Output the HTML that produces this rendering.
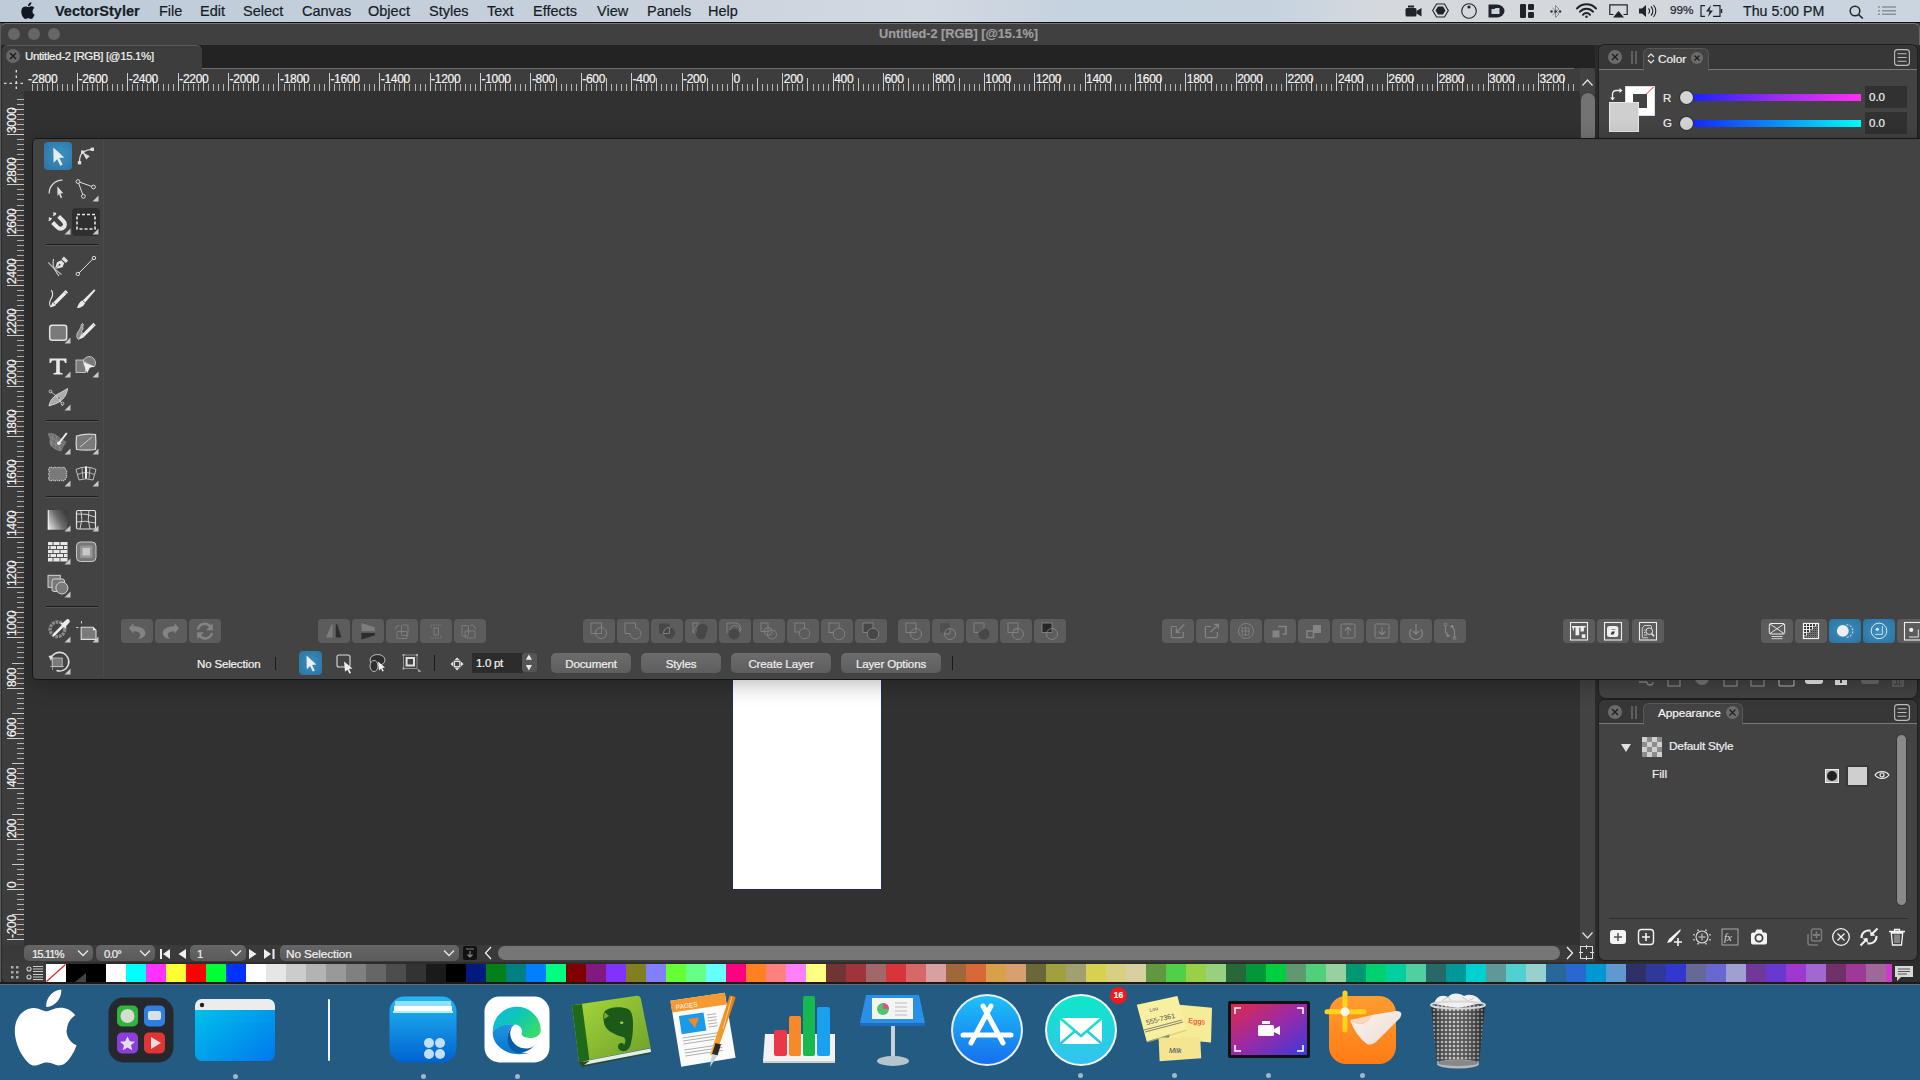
<!DOCTYPE html><html><head><meta charset="utf-8"><style>
*{margin:0;padding:0;box-sizing:border-box}
html,body{width:1920px;height:1080px;overflow:hidden;background:#245b82;font-family:"Liberation Sans",sans-serif}
.a{position:absolute}
.t{position:absolute;white-space:nowrap;line-height:1;-webkit-text-stroke:0.2px currentColor}
svg{position:absolute;overflow:visible}
.btn{position:absolute;width:32px;height:24px;background:#5a5a5a;border-radius:4px}
.pb{position:absolute;-webkit-text-stroke:0.2px currentColor;height:20px;background:linear-gradient(#6c6c6c,#5e5e5e);border-radius:5px;color:#f0f0f0;font-size:11.6px;letter-spacing:-0.15px;text-align:center;line-height:21px}
</style></head><body>
<div class="a" style="left:0;top:0;width:1920px;height:22px;background:linear-gradient(90deg,#bfcbd9 0%,#c6d0dc 30%,#cfd6df 42%,#d3d9e1 48%,#c5d2df 56%,#c6d3df 66%,#d5d9de 72%,#d4d8dd 86%,#c8d3df 92%,#cad5e0 100%)"></div>
<svg style="left:21px;top:2px" width="14" height="17" viewBox="0 0 14 17"><path fill="#111820" d="M11.6 9.1c0-2 1.7-3 1.8-3.1-1-1.4-2.5-1.6-3-1.7-1.3-.1-2.5.8-3.2.8-.7 0-1.7-.8-2.8-.7C3 4.400 1.700 5.200 1 6.500-.5 9.100.6 12.900 2 15c.7 1 1.500 2.100 2.600 2 1-.0 1.400-.7 2.700-.7 1.200 0 1.600.7 2.700.6 1.100 0 1.800-1 2.500-2 .8-1.100 1.100-2.200 1.100-2.300 0 0-2.100-.8-2.100-3.200zM9.500 3c.6-.7 1-1.700.9-2.700-.9 0-1.900.6-2.500 1.300-.5.600-1 1.600-.9 2.600 1 .1 1.900-.5 2.500-1.200z"/></svg>
<div class="t" style="left:55px;top:4px;font-size:14.5px;color:#161c26;font-weight:bold;">VectorStyler</div>
<div class="t" style="left:159px;top:4px;font-size:14.5px;color:#161c26;">File</div>
<div class="t" style="left:200px;top:4px;font-size:14.5px;color:#161c26;">Edit</div>
<div class="t" style="left:243px;top:4px;font-size:14.5px;color:#161c26;">Select</div>
<div class="t" style="left:302px;top:4px;font-size:14.5px;color:#161c26;">Canvas</div>
<div class="t" style="left:368px;top:4px;font-size:14.5px;color:#161c26;">Object</div>
<div class="t" style="left:429px;top:4px;font-size:14.5px;color:#161c26;">Styles</div>
<div class="t" style="left:487px;top:4px;font-size:14.5px;color:#161c26;">Text</div>
<div class="t" style="left:533px;top:4px;font-size:14.5px;color:#161c26;">Effects</div>
<div class="t" style="left:597px;top:4px;font-size:14.5px;color:#161c26;">View</div>
<div class="t" style="left:647px;top:4px;font-size:14.5px;color:#161c26;">Panels</div>
<div class="t" style="left:708px;top:4px;font-size:14.5px;color:#161c26;">Help</div>
<div class="t" style="left:1670px;top:5px;font-size:11.8px;color:#1e232b">99%</div>
<div class="t" style="left:1743px;top:4px;font-size:14.2px;color:#161c26">Thu 5:00 PM</div>
<svg style="left:1405px;top:5px;" width="18" height="12" viewBox="0 0 18 12"><rect x="0.5" y="3" width="11" height="8.5" rx="1.5" fill="#202428"/><rect x="3" y="0.5" width="6" height="2" fill="#202428"/><path d="M11.5 6L16.5 3V11.5L11.5 8.5Z" fill="#202428"/></svg>
<svg style="left:1432px;top:3px;" width="17" height="15" viewBox="0 0 17 15"><path d="M4.5 1H12.5L16.3 7.5L12.5 14H4.5L0.7 7.5Z" fill="none" stroke="#202428" stroke-width="1.1"/><path d="M6 3.5H11L13.5 7.5L11 11.5H6L3.5 7.5Z" fill="#202428"/></svg>
<svg style="left:1461px;top:3px;" width="16" height="16" viewBox="0 0 16 16"><circle cx="8" cy="8" r="7.3" fill="none" stroke="#202428" stroke-width="1.1"/><circle cx="8" cy="4" r="1.6" fill="#202428"/></svg>
<svg style="left:1488px;top:4px;" width="17" height="14" viewBox="0 0 17 14"><path d="M0.5 0.5H9A7.5 6.5 0 0 1 9 13.5H0.5Z" fill="#202428"/><path d="M3.5 5H6.5L7.5 4H11.5V10H3.5Z" fill="#c9d3de"/></svg>
<svg style="left:1520px;top:4px;" width="14" height="14" viewBox="0 0 14 14"><rect x="0" y="0" width="6" height="14" rx="1.2" fill="#202428"/><rect x="8" y="0" width="6" height="6" rx="1.2" fill="#202428"/><rect x="8" y="8" width="6" height="6" rx="1.2" fill="#202428"/></svg>
<svg style="left:1550px;top:4px;" width="12" height="15" viewBox="0 0 12 15"><path d="M2.5 4L9 10L5.5 13.5V1.5L9 5L2.5 11" fill="none" stroke="#7a7f86" stroke-width="0.9"/><circle cx="1.5" cy="7.5" r="1.3" fill="#333"/><circle cx="5.5" cy="7.5" r="1.3" fill="#333"/><circle cx="10" cy="7.5" r="1.3" fill="#333"/></svg>
<svg style="left:1576px;top:3px;" width="21" height="15" viewBox="0 0 21 15"><path d="M1 5.5A13 13 0 0 1 20 5.5M4 8.7A8.5 8.5 0 0 1 17 8.7M7 11.8A4.2 4.2 0 0 1 14 11.8" fill="none" stroke="#202428" stroke-width="2" stroke-linecap="round"/><circle cx="10.5" cy="13.8" r="1.3" fill="#202428"/></svg>
<svg style="left:1609px;top:4px;" width="19" height="14" viewBox="0 0 19 14"><path d="M4.5 10.5H0.8V0.8H18.2V10.5H14.5" fill="none" stroke="#202428" stroke-width="1.2"/><path d="M9.5 7L15 13.5H4Z" fill="#202428"/></svg>
<svg style="left:1639px;top:5px;" width="17" height="12" viewBox="0 0 17 12"><path d="M0 3.5H3L7 0V12L3 8.5H0Z" fill="#202428"/><path d="M9.5 3.5A3.5 3.5 0 0 1 9.5 8.5M12 1.5A6.5 6.5 0 0 1 12 10.5M14.5 0A9 9 0 0 1 14.5 12" fill="none" stroke="#202428" stroke-width="1.1"/></svg>
<svg style="left:1700px;top:5px;" width="23" height="12" viewBox="0 0 23 12"><path d="M5 0.7H1V11.3H5M13 0.7H20V11.3H13" fill="none" stroke="#202428" stroke-width="1.2"/><path d="M21.5 4V8" stroke="#202428" stroke-width="1.5"/><path d="M11 0L6 6.5H9.5L8 12L13 5.5H9.5Z" fill="#202428"/></svg>
<svg style="left:1849px;top:5px;" width="15" height="14" viewBox="0 0 15 14"><circle cx="6" cy="6" r="4.8" fill="none" stroke="#202428" stroke-width="1.5"/><path d="M9.5 9.5L13.8 13.5" stroke="#202428" stroke-width="1.7"/></svg>
<svg style="left:1878px;top:6px;" width="19" height="10" viewBox="0 0 19 10"><path d="M0 1H2M0 4.7H2M0 8.3H2M4 1H18M4 4.7H18M4 8.3H18" stroke="#8a9098" stroke-width="1.6"/></svg>
<div class="a" style="left:0;top:22px;width:1920px;height:964px;background:#404040;border-top:1px solid #0e0e0e"></div>
<div class="a" style="left:0;top:23px;width:1px;height:962px;background:#5a5a5a"></div>
<div class="a" style="left:1px;top:45px;width:1px;height:940px;background:#2a2a2a"></div>
<div class="a" style="left:8px;top:28px;width:12px;height:12px;border-radius:6px;background:#666"></div>
<div class="a" style="left:28px;top:28px;width:12px;height:12px;border-radius:6px;background:#666"></div>
<div class="a" style="left:48px;top:28px;width:12px;height:12px;border-radius:6px;background:#666"></div>
<div class="t" style="left:879px;top:28px;font-size:12.7px;font-weight:bold;color:#9e9e9e">Untitled-2 [RGB] [@15.1%]</div>
<div class="a" style="left:2px;top:45px;width:1597px;height:23px;background:#232323"></div>
<div class="a" style="left:2px;top:68px;width:1572px;height:1px;background:#6e6e6e"></div>
<div class="a" style="left:2px;top:45px;width:200px;height:24px;background:#3d3d3d;border-top:1px solid #5a5a5a;border-radius:6px 6px 0 0"></div>
<div class="a" style="left:6px;top:49px;width:14px;height:14px;border-radius:7px;background:#666"></div>
<svg style="left:9px;top:52px" width="8" height="8"><path d="M1 1L7 7M7 1L1 7" stroke="#1a1a1a" stroke-width="1.3"/></svg>
<div class="t" style="left:25px;top:51px;font-size:11.5px;color:#f2f2f2;letter-spacing:-0.35px">Untitled-2 [RGB] [@15.1%]</div>
<div class="a" style="left:2px;top:69px;width:1593px;height:22px;background:#3d3d3d"></div>
<div class="a" style="left:2px;top:69px;width:22px;height:891px;background:#3d3d3d"></div>
<div class="a" style="left:24px;top:91px;width:1556px;height:854px;background:#313131"></div>
<svg style="left:3px;top:69px" width="21" height="22"><g stroke="#dcdcdc" stroke-width="1.4" stroke-dasharray="2.5 3"><path d="M13.3 1V20"/><path d="M1 14.4H21"/></g></svg>
<svg style="left:0;top:0" width="1920" height="100"><path d="M32.5 84V91" stroke="#b4b4b4"/><path d="M37.5 84V91" stroke="#b4b4b4"/><path d="M42.5 84V91" stroke="#b4b4b4"/><path d="M47.5 84V91" stroke="#b4b4b4"/><path d="M52.5 78V91" stroke="#c8c8c8"/><path d="M57.5 84V91" stroke="#b4b4b4"/><path d="M62.5 84V91" stroke="#b4b4b4"/><path d="M67.5 84V91" stroke="#b4b4b4"/><path d="M72.5 84V91" stroke="#b4b4b4"/><path d="M77.5 73V91" stroke="#cfcfcf"/><path d="M82.5 84V91" stroke="#b4b4b4"/><path d="M87.5 84V91" stroke="#b4b4b4"/><path d="M92.5 84V91" stroke="#b4b4b4"/><path d="M97.5 84V91" stroke="#b4b4b4"/><path d="M102.5 78V91" stroke="#c8c8c8"/><path d="M107.5 84V91" stroke="#b4b4b4"/><path d="M112.5 84V91" stroke="#b4b4b4"/><path d="M117.5 84V91" stroke="#b4b4b4"/><path d="M122.5 84V91" stroke="#b4b4b4"/><path d="M127.5 73V91" stroke="#cfcfcf"/><path d="M132.5 84V91" stroke="#b4b4b4"/><path d="M137.5 84V91" stroke="#b4b4b4"/><path d="M142.5 84V91" stroke="#b4b4b4"/><path d="M147.5 84V91" stroke="#b4b4b4"/><path d="M153.5 78V91" stroke="#c8c8c8"/><path d="M158.5 84V91" stroke="#b4b4b4"/><path d="M163.5 84V91" stroke="#b4b4b4"/><path d="M168.5 84V91" stroke="#b4b4b4"/><path d="M173.5 84V91" stroke="#b4b4b4"/><path d="M178.5 73V91" stroke="#cfcfcf"/><path d="M183.5 84V91" stroke="#b4b4b4"/><path d="M188.5 84V91" stroke="#b4b4b4"/><path d="M193.5 84V91" stroke="#b4b4b4"/><path d="M198.5 84V91" stroke="#b4b4b4"/><path d="M203.5 78V91" stroke="#c8c8c8"/><path d="M208.5 84V91" stroke="#b4b4b4"/><path d="M213.5 84V91" stroke="#b4b4b4"/><path d="M218.5 84V91" stroke="#b4b4b4"/><path d="M223.5 84V91" stroke="#b4b4b4"/><path d="M228.5 73V91" stroke="#cfcfcf"/><path d="M233.5 84V91" stroke="#b4b4b4"/><path d="M238.5 84V91" stroke="#b4b4b4"/><path d="M243.5 84V91" stroke="#b4b4b4"/><path d="M248.5 84V91" stroke="#b4b4b4"/><path d="M253.5 78V91" stroke="#c8c8c8"/><path d="M258.5 84V91" stroke="#b4b4b4"/><path d="M263.5 84V91" stroke="#b4b4b4"/><path d="M268.5 84V91" stroke="#b4b4b4"/><path d="M273.5 84V91" stroke="#b4b4b4"/><path d="M278.5 73V91" stroke="#cfcfcf"/><path d="M284.5 84V91" stroke="#b4b4b4"/><path d="M289.5 84V91" stroke="#b4b4b4"/><path d="M294.5 84V91" stroke="#b4b4b4"/><path d="M299.5 84V91" stroke="#b4b4b4"/><path d="M304.5 78V91" stroke="#c8c8c8"/><path d="M309.5 84V91" stroke="#b4b4b4"/><path d="M314.5 84V91" stroke="#b4b4b4"/><path d="M319.5 84V91" stroke="#b4b4b4"/><path d="M324.5 84V91" stroke="#b4b4b4"/><path d="M329.5 73V91" stroke="#cfcfcf"/><path d="M334.5 84V91" stroke="#b4b4b4"/><path d="M339.5 84V91" stroke="#b4b4b4"/><path d="M344.5 84V91" stroke="#b4b4b4"/><path d="M349.5 84V91" stroke="#b4b4b4"/><path d="M354.5 78V91" stroke="#c8c8c8"/><path d="M359.5 84V91" stroke="#b4b4b4"/><path d="M364.5 84V91" stroke="#b4b4b4"/><path d="M369.5 84V91" stroke="#b4b4b4"/><path d="M374.5 84V91" stroke="#b4b4b4"/><path d="M379.5 73V91" stroke="#cfcfcf"/><path d="M384.5 84V91" stroke="#b4b4b4"/><path d="M389.5 84V91" stroke="#b4b4b4"/><path d="M394.5 84V91" stroke="#b4b4b4"/><path d="M399.5 84V91" stroke="#b4b4b4"/><path d="M404.5 78V91" stroke="#c8c8c8"/><path d="M409.5 84V91" stroke="#b4b4b4"/><path d="M415.5 84V91" stroke="#b4b4b4"/><path d="M420.5 84V91" stroke="#b4b4b4"/><path d="M425.5 84V91" stroke="#b4b4b4"/><path d="M430.5 73V91" stroke="#cfcfcf"/><path d="M435.5 84V91" stroke="#b4b4b4"/><path d="M440.5 84V91" stroke="#b4b4b4"/><path d="M445.5 84V91" stroke="#b4b4b4"/><path d="M450.5 84V91" stroke="#b4b4b4"/><path d="M455.5 78V91" stroke="#c8c8c8"/><path d="M460.5 84V91" stroke="#b4b4b4"/><path d="M465.5 84V91" stroke="#b4b4b4"/><path d="M470.5 84V91" stroke="#b4b4b4"/><path d="M475.5 84V91" stroke="#b4b4b4"/><path d="M480.5 73V91" stroke="#cfcfcf"/><path d="M485.5 84V91" stroke="#b4b4b4"/><path d="M490.5 84V91" stroke="#b4b4b4"/><path d="M495.5 84V91" stroke="#b4b4b4"/><path d="M500.5 84V91" stroke="#b4b4b4"/><path d="M505.5 78V91" stroke="#c8c8c8"/><path d="M510.5 84V91" stroke="#b4b4b4"/><path d="M515.5 84V91" stroke="#b4b4b4"/><path d="M520.5 84V91" stroke="#b4b4b4"/><path d="M525.5 84V91" stroke="#b4b4b4"/><path d="M530.5 73V91" stroke="#cfcfcf"/><path d="M535.5 84V91" stroke="#b4b4b4"/><path d="M540.5 84V91" stroke="#b4b4b4"/><path d="M545.5 84V91" stroke="#b4b4b4"/><path d="M551.5 84V91" stroke="#b4b4b4"/><path d="M556.5 78V91" stroke="#c8c8c8"/><path d="M561.5 84V91" stroke="#b4b4b4"/><path d="M566.5 84V91" stroke="#b4b4b4"/><path d="M571.5 84V91" stroke="#b4b4b4"/><path d="M576.5 84V91" stroke="#b4b4b4"/><path d="M581.5 73V91" stroke="#cfcfcf"/><path d="M586.5 84V91" stroke="#b4b4b4"/><path d="M591.5 84V91" stroke="#b4b4b4"/><path d="M596.5 84V91" stroke="#b4b4b4"/><path d="M601.5 84V91" stroke="#b4b4b4"/><path d="M606.5 78V91" stroke="#c8c8c8"/><path d="M611.5 84V91" stroke="#b4b4b4"/><path d="M616.5 84V91" stroke="#b4b4b4"/><path d="M621.5 84V91" stroke="#b4b4b4"/><path d="M626.5 84V91" stroke="#b4b4b4"/><path d="M631.5 73V91" stroke="#cfcfcf"/><path d="M636.5 84V91" stroke="#b4b4b4"/><path d="M641.5 84V91" stroke="#b4b4b4"/><path d="M646.5 84V91" stroke="#b4b4b4"/><path d="M651.5 84V91" stroke="#b4b4b4"/><path d="M656.5 78V91" stroke="#c8c8c8"/><path d="M661.5 84V91" stroke="#b4b4b4"/><path d="M666.5 84V91" stroke="#b4b4b4"/><path d="M671.5 84V91" stroke="#b4b4b4"/><path d="M676.5 84V91" stroke="#b4b4b4"/><path d="M682.5 73V91" stroke="#cfcfcf"/><path d="M687.5 84V91" stroke="#b4b4b4"/><path d="M692.5 84V91" stroke="#b4b4b4"/><path d="M697.5 84V91" stroke="#b4b4b4"/><path d="M702.5 84V91" stroke="#b4b4b4"/><path d="M707.5 78V91" stroke="#c8c8c8"/><path d="M712.5 84V91" stroke="#b4b4b4"/><path d="M717.5 84V91" stroke="#b4b4b4"/><path d="M722.5 84V91" stroke="#b4b4b4"/><path d="M727.5 84V91" stroke="#b4b4b4"/><path d="M732.5 73V91" stroke="#cfcfcf"/><path d="M737.5 84V91" stroke="#b4b4b4"/><path d="M742.5 84V91" stroke="#b4b4b4"/><path d="M747.5 84V91" stroke="#b4b4b4"/><path d="M752.5 84V91" stroke="#b4b4b4"/><path d="M757.5 78V91" stroke="#c8c8c8"/><path d="M762.5 84V91" stroke="#b4b4b4"/><path d="M767.5 84V91" stroke="#b4b4b4"/><path d="M772.5 84V91" stroke="#b4b4b4"/><path d="M777.5 84V91" stroke="#b4b4b4"/><path d="M782.5 73V91" stroke="#cfcfcf"/><path d="M787.5 84V91" stroke="#b4b4b4"/><path d="M792.5 84V91" stroke="#b4b4b4"/><path d="M797.5 84V91" stroke="#b4b4b4"/><path d="M802.5 84V91" stroke="#b4b4b4"/><path d="M807.5 78V91" stroke="#c8c8c8"/><path d="M813.5 84V91" stroke="#b4b4b4"/><path d="M818.5 84V91" stroke="#b4b4b4"/><path d="M823.5 84V91" stroke="#b4b4b4"/><path d="M828.5 84V91" stroke="#b4b4b4"/><path d="M833.5 73V91" stroke="#cfcfcf"/><path d="M838.5 84V91" stroke="#b4b4b4"/><path d="M843.5 84V91" stroke="#b4b4b4"/><path d="M848.5 84V91" stroke="#b4b4b4"/><path d="M853.5 84V91" stroke="#b4b4b4"/><path d="M858.5 78V91" stroke="#c8c8c8"/><path d="M863.5 84V91" stroke="#b4b4b4"/><path d="M868.5 84V91" stroke="#b4b4b4"/><path d="M873.5 84V91" stroke="#b4b4b4"/><path d="M878.5 84V91" stroke="#b4b4b4"/><path d="M883.5 73V91" stroke="#cfcfcf"/><path d="M888.5 84V91" stroke="#b4b4b4"/><path d="M893.5 84V91" stroke="#b4b4b4"/><path d="M898.5 84V91" stroke="#b4b4b4"/><path d="M903.5 84V91" stroke="#b4b4b4"/><path d="M908.5 78V91" stroke="#c8c8c8"/><path d="M913.5 84V91" stroke="#b4b4b4"/><path d="M918.5 84V91" stroke="#b4b4b4"/><path d="M923.5 84V91" stroke="#b4b4b4"/><path d="M928.5 84V91" stroke="#b4b4b4"/><path d="M933.5 73V91" stroke="#cfcfcf"/><path d="M938.5 84V91" stroke="#b4b4b4"/><path d="M943.5 84V91" stroke="#b4b4b4"/><path d="M949.5 84V91" stroke="#b4b4b4"/><path d="M954.5 84V91" stroke="#b4b4b4"/><path d="M959.5 78V91" stroke="#c8c8c8"/><path d="M964.5 84V91" stroke="#b4b4b4"/><path d="M969.5 84V91" stroke="#b4b4b4"/><path d="M974.5 84V91" stroke="#b4b4b4"/><path d="M979.5 84V91" stroke="#b4b4b4"/><path d="M984.5 73V91" stroke="#cfcfcf"/><path d="M989.5 84V91" stroke="#b4b4b4"/><path d="M994.5 84V91" stroke="#b4b4b4"/><path d="M999.5 84V91" stroke="#b4b4b4"/><path d="M1004.5 84V91" stroke="#b4b4b4"/><path d="M1009.5 78V91" stroke="#c8c8c8"/><path d="M1014.5 84V91" stroke="#b4b4b4"/><path d="M1019.5 84V91" stroke="#b4b4b4"/><path d="M1024.5 84V91" stroke="#b4b4b4"/><path d="M1029.5 84V91" stroke="#b4b4b4"/><path d="M1034.5 73V91" stroke="#cfcfcf"/><path d="M1039.5 84V91" stroke="#b4b4b4"/><path d="M1044.5 84V91" stroke="#b4b4b4"/><path d="M1049.5 84V91" stroke="#b4b4b4"/><path d="M1054.5 84V91" stroke="#b4b4b4"/><path d="M1059.5 78V91" stroke="#c8c8c8"/><path d="M1064.5 84V91" stroke="#b4b4b4"/><path d="M1069.5 84V91" stroke="#b4b4b4"/><path d="M1074.5 84V91" stroke="#b4b4b4"/><path d="M1080.5 84V91" stroke="#b4b4b4"/><path d="M1085.5 73V91" stroke="#cfcfcf"/><path d="M1090.5 84V91" stroke="#b4b4b4"/><path d="M1095.5 84V91" stroke="#b4b4b4"/><path d="M1100.5 84V91" stroke="#b4b4b4"/><path d="M1105.5 84V91" stroke="#b4b4b4"/><path d="M1110.5 78V91" stroke="#c8c8c8"/><path d="M1115.5 84V91" stroke="#b4b4b4"/><path d="M1120.5 84V91" stroke="#b4b4b4"/><path d="M1125.5 84V91" stroke="#b4b4b4"/><path d="M1130.5 84V91" stroke="#b4b4b4"/><path d="M1135.5 73V91" stroke="#cfcfcf"/><path d="M1140.5 84V91" stroke="#b4b4b4"/><path d="M1145.5 84V91" stroke="#b4b4b4"/><path d="M1150.5 84V91" stroke="#b4b4b4"/><path d="M1155.5 84V91" stroke="#b4b4b4"/><path d="M1160.5 78V91" stroke="#c8c8c8"/><path d="M1165.5 84V91" stroke="#b4b4b4"/><path d="M1170.5 84V91" stroke="#b4b4b4"/><path d="M1175.5 84V91" stroke="#b4b4b4"/><path d="M1180.5 84V91" stroke="#b4b4b4"/><path d="M1185.5 73V91" stroke="#cfcfcf"/><path d="M1190.5 84V91" stroke="#b4b4b4"/><path d="M1195.5 84V91" stroke="#b4b4b4"/><path d="M1200.5 84V91" stroke="#b4b4b4"/><path d="M1205.5 84V91" stroke="#b4b4b4"/><path d="M1211.5 78V91" stroke="#c8c8c8"/><path d="M1216.5 84V91" stroke="#b4b4b4"/><path d="M1221.5 84V91" stroke="#b4b4b4"/><path d="M1226.5 84V91" stroke="#b4b4b4"/><path d="M1231.5 84V91" stroke="#b4b4b4"/><path d="M1236.5 73V91" stroke="#cfcfcf"/><path d="M1241.5 84V91" stroke="#b4b4b4"/><path d="M1246.5 84V91" stroke="#b4b4b4"/><path d="M1251.5 84V91" stroke="#b4b4b4"/><path d="M1256.5 84V91" stroke="#b4b4b4"/><path d="M1261.5 78V91" stroke="#c8c8c8"/><path d="M1266.5 84V91" stroke="#b4b4b4"/><path d="M1271.5 84V91" stroke="#b4b4b4"/><path d="M1276.5 84V91" stroke="#b4b4b4"/><path d="M1281.5 84V91" stroke="#b4b4b4"/><path d="M1286.5 73V91" stroke="#cfcfcf"/><path d="M1291.5 84V91" stroke="#b4b4b4"/><path d="M1296.5 84V91" stroke="#b4b4b4"/><path d="M1301.5 84V91" stroke="#b4b4b4"/><path d="M1306.5 84V91" stroke="#b4b4b4"/><path d="M1311.5 78V91" stroke="#c8c8c8"/><path d="M1316.5 84V91" stroke="#b4b4b4"/><path d="M1321.5 84V91" stroke="#b4b4b4"/><path d="M1326.5 84V91" stroke="#b4b4b4"/><path d="M1331.5 84V91" stroke="#b4b4b4"/><path d="M1336.5 73V91" stroke="#cfcfcf"/><path d="M1341.5 84V91" stroke="#b4b4b4"/><path d="M1347.5 84V91" stroke="#b4b4b4"/><path d="M1352.5 84V91" stroke="#b4b4b4"/><path d="M1357.5 84V91" stroke="#b4b4b4"/><path d="M1362.5 78V91" stroke="#c8c8c8"/><path d="M1367.5 84V91" stroke="#b4b4b4"/><path d="M1372.5 84V91" stroke="#b4b4b4"/><path d="M1377.5 84V91" stroke="#b4b4b4"/><path d="M1382.5 84V91" stroke="#b4b4b4"/><path d="M1387.5 73V91" stroke="#cfcfcf"/><path d="M1392.5 84V91" stroke="#b4b4b4"/><path d="M1397.5 84V91" stroke="#b4b4b4"/><path d="M1402.5 84V91" stroke="#b4b4b4"/><path d="M1407.5 84V91" stroke="#b4b4b4"/><path d="M1412.5 78V91" stroke="#c8c8c8"/><path d="M1417.5 84V91" stroke="#b4b4b4"/><path d="M1422.5 84V91" stroke="#b4b4b4"/><path d="M1427.5 84V91" stroke="#b4b4b4"/><path d="M1432.5 84V91" stroke="#b4b4b4"/><path d="M1437.5 73V91" stroke="#cfcfcf"/><path d="M1442.5 84V91" stroke="#b4b4b4"/><path d="M1447.5 84V91" stroke="#b4b4b4"/><path d="M1452.5 84V91" stroke="#b4b4b4"/><path d="M1457.5 84V91" stroke="#b4b4b4"/><path d="M1462.5 78V91" stroke="#c8c8c8"/><path d="M1467.5 84V91" stroke="#b4b4b4"/><path d="M1472.5 84V91" stroke="#b4b4b4"/><path d="M1478.5 84V91" stroke="#b4b4b4"/><path d="M1483.5 84V91" stroke="#b4b4b4"/><path d="M1488.5 73V91" stroke="#cfcfcf"/><path d="M1493.5 84V91" stroke="#b4b4b4"/><path d="M1498.5 84V91" stroke="#b4b4b4"/><path d="M1503.5 84V91" stroke="#b4b4b4"/><path d="M1508.5 84V91" stroke="#b4b4b4"/><path d="M1513.5 78V91" stroke="#c8c8c8"/><path d="M1518.5 84V91" stroke="#b4b4b4"/><path d="M1523.5 84V91" stroke="#b4b4b4"/><path d="M1528.5 84V91" stroke="#b4b4b4"/><path d="M1533.5 84V91" stroke="#b4b4b4"/><path d="M1538.5 73V91" stroke="#cfcfcf"/><path d="M1543.5 84V91" stroke="#b4b4b4"/><path d="M1548.5 84V91" stroke="#b4b4b4"/><path d="M1553.5 84V91" stroke="#b4b4b4"/><path d="M1558.5 84V91" stroke="#b4b4b4"/><path d="M1563.5 78V91" stroke="#c8c8c8"/><path d="M1568.5 84V91" stroke="#b4b4b4"/><path d="M1573.5 84V91" stroke="#b4b4b4"/></svg>
<div class="t" style="left:28.1px;top:73px;font-size:12px;color:#f4f4f4;letter-spacing:-0.3px">-2800</div>
<div class="t" style="left:78.5px;top:73px;font-size:12px;color:#f4f4f4;letter-spacing:-0.3px">-2600</div>
<div class="t" style="left:128.8px;top:73px;font-size:12px;color:#f4f4f4;letter-spacing:-0.3px">-2400</div>
<div class="t" style="left:179.2px;top:73px;font-size:12px;color:#f4f4f4;letter-spacing:-0.3px">-2200</div>
<div class="t" style="left:229.6px;top:73px;font-size:12px;color:#f4f4f4;letter-spacing:-0.3px">-2000</div>
<div class="t" style="left:280.0px;top:73px;font-size:12px;color:#f4f4f4;letter-spacing:-0.3px">-1800</div>
<div class="t" style="left:330.4px;top:73px;font-size:12px;color:#f4f4f4;letter-spacing:-0.3px">-1600</div>
<div class="t" style="left:380.7px;top:73px;font-size:12px;color:#f4f4f4;letter-spacing:-0.3px">-1400</div>
<div class="t" style="left:431.1px;top:73px;font-size:12px;color:#f4f4f4;letter-spacing:-0.3px">-1200</div>
<div class="t" style="left:481.5px;top:73px;font-size:12px;color:#f4f4f4;letter-spacing:-0.3px">-1000</div>
<div class="t" style="left:531.9px;top:73px;font-size:12px;color:#f4f4f4;letter-spacing:-0.3px">-800</div>
<div class="t" style="left:582.3px;top:73px;font-size:12px;color:#f4f4f4;letter-spacing:-0.3px">-600</div>
<div class="t" style="left:632.6px;top:73px;font-size:12px;color:#f4f4f4;letter-spacing:-0.3px">-400</div>
<div class="t" style="left:683.0px;top:73px;font-size:12px;color:#f4f4f4;letter-spacing:-0.3px">-200</div>
<div class="t" style="left:733.4px;top:73px;font-size:12px;color:#f4f4f4;letter-spacing:-0.3px">0</div>
<div class="t" style="left:783.8px;top:73px;font-size:12px;color:#f4f4f4;letter-spacing:-0.3px">200</div>
<div class="t" style="left:834.2px;top:73px;font-size:12px;color:#f4f4f4;letter-spacing:-0.3px">400</div>
<div class="t" style="left:884.5px;top:73px;font-size:12px;color:#f4f4f4;letter-spacing:-0.3px">600</div>
<div class="t" style="left:934.9px;top:73px;font-size:12px;color:#f4f4f4;letter-spacing:-0.3px">800</div>
<div class="t" style="left:985.3px;top:73px;font-size:12px;color:#f4f4f4;letter-spacing:-0.3px">1000</div>
<div class="t" style="left:1035.7px;top:73px;font-size:12px;color:#f4f4f4;letter-spacing:-0.3px">1200</div>
<div class="t" style="left:1086.1px;top:73px;font-size:12px;color:#f4f4f4;letter-spacing:-0.3px">1400</div>
<div class="t" style="left:1136.4px;top:73px;font-size:12px;color:#f4f4f4;letter-spacing:-0.3px">1600</div>
<div class="t" style="left:1186.8px;top:73px;font-size:12px;color:#f4f4f4;letter-spacing:-0.3px">1800</div>
<div class="t" style="left:1237.2px;top:73px;font-size:12px;color:#f4f4f4;letter-spacing:-0.3px">2000</div>
<div class="t" style="left:1287.6px;top:73px;font-size:12px;color:#f4f4f4;letter-spacing:-0.3px">2200</div>
<div class="t" style="left:1338.0px;top:73px;font-size:12px;color:#f4f4f4;letter-spacing:-0.3px">2400</div>
<div class="t" style="left:1388.3px;top:73px;font-size:12px;color:#f4f4f4;letter-spacing:-0.3px">2600</div>
<div class="t" style="left:1438.7px;top:73px;font-size:12px;color:#f4f4f4;letter-spacing:-0.3px">2800</div>
<div class="t" style="left:1489.1px;top:73px;font-size:12px;color:#f4f4f4;letter-spacing:-0.3px">3000</div>
<div class="t" style="left:1539.5px;top:73px;font-size:12px;color:#f4f4f4;letter-spacing:-0.3px">3200</div>
<svg style="left:0;top:0" width="30" height="1000"><path d="M7 939.5H24" stroke="#cfcfcf"/><path d="M17 934.5H24" stroke="#b4b4b4"/><path d="M17 929.5H24" stroke="#b4b4b4"/><path d="M17 924.5H24" stroke="#b4b4b4"/><path d="M17 919.5H24" stroke="#b4b4b4"/><path d="M12 914.5H24" stroke="#c8c8c8"/><path d="M17 909.5H24" stroke="#b4b4b4"/><path d="M17 904.5H24" stroke="#b4b4b4"/><path d="M17 899.5H24" stroke="#b4b4b4"/><path d="M17 894.5H24" stroke="#b4b4b4"/><path d="M7 889.5H24" stroke="#cfcfcf"/><path d="M17 884.5H24" stroke="#b4b4b4"/><path d="M17 879.5H24" stroke="#b4b4b4"/><path d="M17 874.5H24" stroke="#b4b4b4"/><path d="M17 869.5H24" stroke="#b4b4b4"/><path d="M12 864.5H24" stroke="#c8c8c8"/><path d="M17 859.5H24" stroke="#b4b4b4"/><path d="M17 854.5H24" stroke="#b4b4b4"/><path d="M17 849.5H24" stroke="#b4b4b4"/><path d="M17 844.5H24" stroke="#b4b4b4"/><path d="M7 839.5H24" stroke="#cfcfcf"/><path d="M17 834.5H24" stroke="#b4b4b4"/><path d="M17 829.5H24" stroke="#b4b4b4"/><path d="M17 824.5H24" stroke="#b4b4b4"/><path d="M17 819.5H24" stroke="#b4b4b4"/><path d="M12 814.5H24" stroke="#c8c8c8"/><path d="M17 808.5H24" stroke="#b4b4b4"/><path d="M17 803.5H24" stroke="#b4b4b4"/><path d="M17 798.5H24" stroke="#b4b4b4"/><path d="M17 793.5H24" stroke="#b4b4b4"/><path d="M7 788.5H24" stroke="#cfcfcf"/><path d="M17 783.5H24" stroke="#b4b4b4"/><path d="M17 778.5H24" stroke="#b4b4b4"/><path d="M17 773.5H24" stroke="#b4b4b4"/><path d="M17 768.5H24" stroke="#b4b4b4"/><path d="M12 763.5H24" stroke="#c8c8c8"/><path d="M17 758.5H24" stroke="#b4b4b4"/><path d="M17 753.5H24" stroke="#b4b4b4"/><path d="M17 748.5H24" stroke="#b4b4b4"/><path d="M17 743.5H24" stroke="#b4b4b4"/><path d="M7 738.5H24" stroke="#cfcfcf"/><path d="M17 733.5H24" stroke="#b4b4b4"/><path d="M17 728.5H24" stroke="#b4b4b4"/><path d="M17 723.5H24" stroke="#b4b4b4"/><path d="M17 718.5H24" stroke="#b4b4b4"/><path d="M12 713.5H24" stroke="#c8c8c8"/><path d="M17 708.5H24" stroke="#b4b4b4"/><path d="M17 703.5H24" stroke="#b4b4b4"/><path d="M17 698.5H24" stroke="#b4b4b4"/><path d="M17 693.5H24" stroke="#b4b4b4"/><path d="M7 688.5H24" stroke="#cfcfcf"/><path d="M17 683.5H24" stroke="#b4b4b4"/><path d="M17 678.5H24" stroke="#b4b4b4"/><path d="M17 673.5H24" stroke="#b4b4b4"/><path d="M17 668.5H24" stroke="#b4b4b4"/><path d="M12 663.5H24" stroke="#c8c8c8"/><path d="M17 657.5H24" stroke="#b4b4b4"/><path d="M17 652.5H24" stroke="#b4b4b4"/><path d="M17 647.5H24" stroke="#b4b4b4"/><path d="M17 642.5H24" stroke="#b4b4b4"/><path d="M7 637.5H24" stroke="#cfcfcf"/><path d="M17 632.5H24" stroke="#b4b4b4"/><path d="M17 627.5H24" stroke="#b4b4b4"/><path d="M17 622.5H24" stroke="#b4b4b4"/><path d="M17 617.5H24" stroke="#b4b4b4"/><path d="M12 612.5H24" stroke="#c8c8c8"/><path d="M17 607.5H24" stroke="#b4b4b4"/><path d="M17 602.5H24" stroke="#b4b4b4"/><path d="M17 597.5H24" stroke="#b4b4b4"/><path d="M17 592.5H24" stroke="#b4b4b4"/><path d="M7 587.5H24" stroke="#cfcfcf"/><path d="M17 582.5H24" stroke="#b4b4b4"/><path d="M17 577.5H24" stroke="#b4b4b4"/><path d="M17 572.5H24" stroke="#b4b4b4"/><path d="M17 567.5H24" stroke="#b4b4b4"/><path d="M12 562.5H24" stroke="#c8c8c8"/><path d="M17 557.5H24" stroke="#b4b4b4"/><path d="M17 552.5H24" stroke="#b4b4b4"/><path d="M17 547.5H24" stroke="#b4b4b4"/><path d="M17 542.5H24" stroke="#b4b4b4"/><path d="M7 537.5H24" stroke="#cfcfcf"/><path d="M17 532.5H24" stroke="#b4b4b4"/><path d="M17 527.5H24" stroke="#b4b4b4"/><path d="M17 522.5H24" stroke="#b4b4b4"/><path d="M17 517.5H24" stroke="#b4b4b4"/><path d="M12 512.5H24" stroke="#c8c8c8"/><path d="M17 506.5H24" stroke="#b4b4b4"/><path d="M17 501.5H24" stroke="#b4b4b4"/><path d="M17 496.5H24" stroke="#b4b4b4"/><path d="M17 491.5H24" stroke="#b4b4b4"/><path d="M7 486.5H24" stroke="#cfcfcf"/><path d="M17 481.5H24" stroke="#b4b4b4"/><path d="M17 476.5H24" stroke="#b4b4b4"/><path d="M17 471.5H24" stroke="#b4b4b4"/><path d="M17 466.5H24" stroke="#b4b4b4"/><path d="M12 461.5H24" stroke="#c8c8c8"/><path d="M17 456.5H24" stroke="#b4b4b4"/><path d="M17 451.5H24" stroke="#b4b4b4"/><path d="M17 446.5H24" stroke="#b4b4b4"/><path d="M17 441.5H24" stroke="#b4b4b4"/><path d="M7 436.5H24" stroke="#cfcfcf"/><path d="M17 431.5H24" stroke="#b4b4b4"/><path d="M17 426.5H24" stroke="#b4b4b4"/><path d="M17 421.5H24" stroke="#b4b4b4"/><path d="M17 416.5H24" stroke="#b4b4b4"/><path d="M12 411.5H24" stroke="#c8c8c8"/><path d="M17 406.5H24" stroke="#b4b4b4"/><path d="M17 401.5H24" stroke="#b4b4b4"/><path d="M17 396.5H24" stroke="#b4b4b4"/><path d="M17 391.5H24" stroke="#b4b4b4"/><path d="M7 386.5H24" stroke="#cfcfcf"/><path d="M17 381.5H24" stroke="#b4b4b4"/><path d="M17 376.5H24" stroke="#b4b4b4"/><path d="M17 371.5H24" stroke="#b4b4b4"/><path d="M17 366.5H24" stroke="#b4b4b4"/><path d="M12 361.5H24" stroke="#c8c8c8"/><path d="M17 356.5H24" stroke="#b4b4b4"/><path d="M17 350.5H24" stroke="#b4b4b4"/><path d="M17 345.5H24" stroke="#b4b4b4"/><path d="M17 340.5H24" stroke="#b4b4b4"/><path d="M7 335.5H24" stroke="#cfcfcf"/><path d="M17 330.5H24" stroke="#b4b4b4"/><path d="M17 325.5H24" stroke="#b4b4b4"/><path d="M17 320.5H24" stroke="#b4b4b4"/><path d="M17 315.5H24" stroke="#b4b4b4"/><path d="M12 310.5H24" stroke="#c8c8c8"/><path d="M17 305.5H24" stroke="#b4b4b4"/><path d="M17 300.5H24" stroke="#b4b4b4"/><path d="M17 295.5H24" stroke="#b4b4b4"/><path d="M17 290.5H24" stroke="#b4b4b4"/><path d="M7 285.5H24" stroke="#cfcfcf"/><path d="M17 280.5H24" stroke="#b4b4b4"/><path d="M17 275.5H24" stroke="#b4b4b4"/><path d="M17 270.5H24" stroke="#b4b4b4"/><path d="M17 265.5H24" stroke="#b4b4b4"/><path d="M12 260.5H24" stroke="#c8c8c8"/><path d="M17 255.5H24" stroke="#b4b4b4"/><path d="M17 250.5H24" stroke="#b4b4b4"/><path d="M17 245.5H24" stroke="#b4b4b4"/><path d="M17 240.5H24" stroke="#b4b4b4"/><path d="M7 235.5H24" stroke="#cfcfcf"/><path d="M17 230.5H24" stroke="#b4b4b4"/><path d="M17 225.5H24" stroke="#b4b4b4"/><path d="M17 220.5H24" stroke="#b4b4b4"/><path d="M17 215.5H24" stroke="#b4b4b4"/><path d="M12 210.5H24" stroke="#c8c8c8"/><path d="M17 205.5H24" stroke="#b4b4b4"/><path d="M17 199.5H24" stroke="#b4b4b4"/><path d="M17 194.5H24" stroke="#b4b4b4"/><path d="M17 189.5H24" stroke="#b4b4b4"/><path d="M7 184.5H24" stroke="#cfcfcf"/><path d="M17 179.5H24" stroke="#b4b4b4"/><path d="M17 174.5H24" stroke="#b4b4b4"/><path d="M17 169.5H24" stroke="#b4b4b4"/><path d="M17 164.5H24" stroke="#b4b4b4"/><path d="M12 159.5H24" stroke="#c8c8c8"/><path d="M17 154.5H24" stroke="#b4b4b4"/><path d="M17 149.5H24" stroke="#b4b4b4"/><path d="M17 144.5H24" stroke="#b4b4b4"/><path d="M17 139.5H24" stroke="#b4b4b4"/><path d="M7 134.5H24" stroke="#cfcfcf"/><path d="M17 129.5H24" stroke="#b4b4b4"/><path d="M17 124.5H24" stroke="#b4b4b4"/><path d="M17 119.5H24" stroke="#b4b4b4"/><path d="M17 114.5H24" stroke="#b4b4b4"/><path d="M12 109.5H24" stroke="#c8c8c8"/><path d="M17 104.5H24" stroke="#b4b4b4"/><path d="M17 99.5H24" stroke="#b4b4b4"/></svg>
<div class="t" style="left:5.5px;top:938.3px;font-size:12px;color:#f4f4f4;letter-spacing:-0.3px;transform-origin:0 0;transform:rotate(-90deg)">-200</div>
<div class="t" style="left:5.5px;top:888.0px;font-size:12px;color:#f4f4f4;letter-spacing:-0.3px;transform-origin:0 0;transform:rotate(-90deg)">0</div>
<div class="t" style="left:5.5px;top:837.7px;font-size:12px;color:#f4f4f4;letter-spacing:-0.3px;transform-origin:0 0;transform:rotate(-90deg)">200</div>
<div class="t" style="left:5.5px;top:787.3px;font-size:12px;color:#f4f4f4;letter-spacing:-0.3px;transform-origin:0 0;transform:rotate(-90deg)">400</div>
<div class="t" style="left:5.5px;top:737.0px;font-size:12px;color:#f4f4f4;letter-spacing:-0.3px;transform-origin:0 0;transform:rotate(-90deg)">600</div>
<div class="t" style="left:5.5px;top:686.7px;font-size:12px;color:#f4f4f4;letter-spacing:-0.3px;transform-origin:0 0;transform:rotate(-90deg)">800</div>
<div class="t" style="left:5.5px;top:636.4px;font-size:12px;color:#f4f4f4;letter-spacing:-0.3px;transform-origin:0 0;transform:rotate(-90deg)">1000</div>
<div class="t" style="left:5.5px;top:586.0px;font-size:12px;color:#f4f4f4;letter-spacing:-0.3px;transform-origin:0 0;transform:rotate(-90deg)">1200</div>
<div class="t" style="left:5.5px;top:535.7px;font-size:12px;color:#f4f4f4;letter-spacing:-0.3px;transform-origin:0 0;transform:rotate(-90deg)">1400</div>
<div class="t" style="left:5.5px;top:485.4px;font-size:12px;color:#f4f4f4;letter-spacing:-0.3px;transform-origin:0 0;transform:rotate(-90deg)">1600</div>
<div class="t" style="left:5.5px;top:435.0px;font-size:12px;color:#f4f4f4;letter-spacing:-0.3px;transform-origin:0 0;transform:rotate(-90deg)">1800</div>
<div class="t" style="left:5.5px;top:384.7px;font-size:12px;color:#f4f4f4;letter-spacing:-0.3px;transform-origin:0 0;transform:rotate(-90deg)">2000</div>
<div class="t" style="left:5.5px;top:334.4px;font-size:12px;color:#f4f4f4;letter-spacing:-0.3px;transform-origin:0 0;transform:rotate(-90deg)">2200</div>
<div class="t" style="left:5.5px;top:284.0px;font-size:12px;color:#f4f4f4;letter-spacing:-0.3px;transform-origin:0 0;transform:rotate(-90deg)">2400</div>
<div class="t" style="left:5.5px;top:233.7px;font-size:12px;color:#f4f4f4;letter-spacing:-0.3px;transform-origin:0 0;transform:rotate(-90deg)">2600</div>
<div class="t" style="left:5.5px;top:183.4px;font-size:12px;color:#f4f4f4;letter-spacing:-0.3px;transform-origin:0 0;transform:rotate(-90deg)">2800</div>
<div class="t" style="left:5.5px;top:133.1px;font-size:12px;color:#f4f4f4;letter-spacing:-0.3px;transform-origin:0 0;transform:rotate(-90deg)">3000</div>
<div class="a" style="left:1574px;top:68px;width:22px;height:1px;background:#3d3d3d"></div>
<div class="a" style="left:1580px;top:68px;width:16px;height:30px;background:#434343;border-radius:0 8px 0 0"></div>
<div class="a" style="left:1580px;top:91px;width:16px;height:854px;background:#434343"></div>
<div class="a" style="left:1581px;top:93px;width:14px;height:50px;border-radius:7px;background:#737373;box-shadow:0 0 0 1px #3a3a3a"></div>
<div class="a" style="left:732px;top:660px;width:150px;height:230px;background:#fff;border:1px solid #1f2a6a;border-top:none"></div>
<div class="a" style="left:2px;top:945px;width:1593px;height:17px;background:#3a3a3a"></div>
<div class="a" style="left:2px;top:962px;width:1918px;height:23px;background:#2d2d2d"></div>
<div class="a" style="left:24px;top:945px;width:69px;height:16px;border-radius:5px;background:linear-gradient(#666,#5a5a5a)"></div>
<div class="t" style="left:32px;top:949px;font-size:11.3px;color:#f0f0f0;letter-spacing:-1px">15.11%</div>
<svg style="left:77px;top:949px;" width="12" height="8" viewBox="0 0 12 8"><path d="M1 1.5L6 6.5L11 1.5" fill="none" stroke="#e8e8e8" stroke-width="1.3"/></svg>
<div class="a" style="left:96px;top:945px;width:59px;height:16px;border-radius:5px;background:linear-gradient(#666,#5a5a5a)"></div>
<div class="t" style="left:104px;top:949px;font-size:11.3px;color:#f0f0f0;letter-spacing:-0.8px">0.0°</div>
<svg style="left:139px;top:949px;" width="12" height="8" viewBox="0 0 12 8"><path d="M1 1.5L6 6.5L11 1.5" fill="none" stroke="#e8e8e8" stroke-width="1.3"/></svg>
<div class="a" style="left:190px;top:945px;width:56px;height:16px;border-radius:5px;background:linear-gradient(#666,#5a5a5a)"></div>
<div class="t" style="left:197px;top:949px;font-size:11.3px;color:#f0f0f0;letter-spacing:-0.2px">1</div>
<svg style="left:230px;top:949px;" width="12" height="8" viewBox="0 0 12 8"><path d="M1 1.5L6 6.5L11 1.5" fill="none" stroke="#e8e8e8" stroke-width="1.3"/></svg>
<div class="a" style="left:280px;top:945px;width:179px;height:16px;border-radius:5px;background:linear-gradient(#666,#5a5a5a)"></div>
<div class="t" style="left:286px;top:949px;font-size:11.8px;color:#f0f0f0;letter-spacing:-0.1px">No Selection</div>
<svg style="left:443px;top:949px;" width="12" height="8" viewBox="0 0 12 8"><path d="M1 1.5L6 6.5L11 1.5" fill="none" stroke="#e8e8e8" stroke-width="1.3"/></svg>
<svg style="left:160px;top:949px;" width="11" height="10" viewBox="0 0 11 10"><path d="M1 0V10" stroke="#f0f0f0" stroke-width="2"/><path d="M10 0V10L3 5Z" fill="#f0f0f0"/></svg>
<svg style="left:178px;top:949px;" width="8" height="10" viewBox="0 0 8 10"><path d="M8 0V10L0.5 5Z" fill="#f0f0f0"/></svg>
<svg style="left:249px;top:949px;" width="8" height="10" viewBox="0 0 8 10"><path d="M0 0V10L7.5 5Z" fill="#f0f0f0"/></svg>
<svg style="left:264px;top:949px;" width="11" height="10" viewBox="0 0 11 10"><path d="M0 0V10L7 5Z" fill="#f0f0f0"/><path d="M9.5 0V10" stroke="#f0f0f0" stroke-width="2"/></svg>
<div class="a" style="left:463px;top:946px;width:14px;height:14px;border-radius:2px;background:#111"></div>
<svg style="left:463px;top:946px;" width="14" height="14" viewBox="0 0 14 14"><path d="M3 3H11M7 5V11M4.5 8.5L7 11L9.5 8.5" fill="none" stroke="#888" stroke-width="1.2"/></svg>
<svg style="left:484px;top:946px;" width="8" height="14" viewBox="0 0 8 14"><path d="M7 1L1.5 7L7 13" fill="none" stroke="#eee" stroke-width="1.3"/></svg>
<div class="a" style="left:498px;top:946px;width:1062px;height:14px;border-radius:7px;background:#767676"></div>
<svg style="left:1566px;top:946px;" width="8" height="14" viewBox="0 0 8 14"><path d="M1 1L6.5 7L1 13" fill="none" stroke="#eee" stroke-width="1.3"/></svg>
<svg style="left:1579px;top:945px;" width="15" height="15" viewBox="0 0 15 15"><rect x="1.5" y="1.5" width="12" height="12" fill="none" stroke="#ddd" stroke-width="1"/><path d="M7.5 0V4M7.5 11V15M0 7.5H4M11 7.5H15" stroke="#ddd" stroke-width="1"/></svg>
<svg style="left:1581px;top:78px;" width="13" height="9" viewBox="0 0 13 9"><path d="M1.5 7.5L6.5 2L11.5 7.5" fill="none" stroke="#e0e0e0" stroke-width="1.3"/></svg>
<svg style="left:1581px;top:931px;" width="13" height="9" viewBox="0 0 13 9"><path d="M1.5 1.5L6.5 7L11.5 1.5" fill="none" stroke="#e0e0e0" stroke-width="1.3"/></svg>
<div class="a" style="left:2px;top:962px;width:44px;height:21px;background:#3c3c3c;border-radius:0 0 0 6px"></div>
<svg style="left:10px;top:965px;" width="10" height="15" viewBox="0 0 10 15"><rect x="1" y="1" width="2.5" height="2.5" fill="#aaa"/><rect x="1" y="6" width="2.5" height="2.5" fill="#aaa"/><rect x="1" y="11" width="2.5" height="2.5" fill="#aaa"/><rect x="6" y="1" width="2.5" height="2.5" fill="#aaa"/><rect x="6" y="6" width="2.5" height="2.5" fill="#aaa"/><rect x="6" y="11" width="2.5" height="2.5" fill="#aaa"/></svg>
<svg style="left:26px;top:965px;" width="18" height="16" viewBox="0 0 18 16"><circle cx="3" cy="4" r="2" fill="none" stroke="#ccc" stroke-width="1.1"/><circle cx="3" cy="12" r="2" fill="none" stroke="#ccc" stroke-width="1.1"/><path d="M7 1.5H17M7 4H17M7 6.5H17M7 9.5H17M7 12H17M7 14.5H17" stroke="#ccc" stroke-width="1"/></svg>
<svg style="left:0;top:964px" width="1920" height="18"><rect x="46" y="0" width="20" height="18" fill="#ffffff"/><rect x="66" y="0" width="20" height="18" fill="#000000"/><rect x="86" y="0" width="20" height="18" fill="#000000"/><rect x="106" y="0" width="20" height="18" fill="#ffffff"/><rect x="126" y="0" width="20" height="18" fill="#00ffff"/><rect x="146" y="0" width="20" height="18" fill="#ff33ff"/><rect x="166" y="0" width="20" height="18" fill="#ffff33"/><rect x="186" y="0" width="20" height="18" fill="#ff0000"/><rect x="206" y="0" width="20" height="18" fill="#00ff33"/><rect x="226" y="0" width="20" height="18" fill="#0033ff"/><rect x="246" y="0" width="20" height="18" fill="#ffffff"/><rect x="266" y="0" width="20" height="18" fill="#e6e6e6"/><rect x="286" y="0" width="20" height="18" fill="#cccccc"/><rect x="306" y="0" width="20" height="18" fill="#b3b3b3"/><rect x="326" y="0" width="20" height="18" fill="#999999"/><rect x="346" y="0" width="20" height="18" fill="#808080"/><rect x="366" y="0" width="20" height="18" fill="#666666"/><rect x="386" y="0" width="20" height="18" fill="#4d4d4d"/><rect x="406" y="0" width="20" height="18" fill="#333333"/><rect x="426" y="0" width="20" height="18" fill="#1a1a1a"/><rect x="446" y="0" width="20" height="18" fill="#000000"/><rect x="466" y="0" width="20" height="18" fill="#001a80"/><rect x="486" y="0" width="20" height="18" fill="#00801a"/><rect x="506" y="0" width="20" height="18" fill="#008080"/><rect x="526" y="0" width="20" height="18" fill="#0080ff"/><rect x="546" y="0" width="20" height="18" fill="#00ff80"/><rect x="566" y="0" width="20" height="18" fill="#800000"/><rect x="586" y="0" width="20" height="18" fill="#801a80"/><rect x="606" y="0" width="20" height="18" fill="#8033ff"/><rect x="626" y="0" width="20" height="18" fill="#808020"/><rect x="646" y="0" width="20" height="18" fill="#8080ff"/><rect x="666" y="0" width="20" height="18" fill="#66ff33"/><rect x="686" y="0" width="20" height="18" fill="#66ff88"/><rect x="706" y="0" width="20" height="18" fill="#66ffff"/><rect x="726" y="0" width="20" height="18" fill="#ff0080"/><rect x="746" y="0" width="20" height="18" fill="#ff8020"/><rect x="766" y="0" width="20" height="18" fill="#ff8080"/><rect x="786" y="0" width="20" height="18" fill="#ff80ff"/><rect x="806" y="0" width="20" height="18" fill="#ffff80"/><rect x="826" y="0" width="20" height="18" fill="#703434"/><rect x="846" y="0" width="20" height="18" fill="#a0343a"/><rect x="866" y="0" width="20" height="18" fill="#a06868"/><rect x="886" y="0" width="20" height="18" fill="#d8343a"/><rect x="906" y="0" width="20" height="18" fill="#d86868"/><rect x="926" y="0" width="20" height="18" fill="#d8a0a0"/><rect x="946" y="0" width="20" height="18" fill="#a0683a"/><rect x="966" y="0" width="20" height="18" fill="#d8683a"/><rect x="986" y="0" width="20" height="18" fill="#d8a048"/><rect x="1006" y="0" width="20" height="18" fill="#d8a070"/><rect x="1026" y="0" width="20" height="18" fill="#68683a"/><rect x="1046" y="0" width="20" height="18" fill="#a0a040"/><rect x="1066" y="0" width="20" height="18" fill="#a0a070"/><rect x="1086" y="0" width="20" height="18" fill="#d8d050"/><rect x="1106" y="0" width="20" height="18" fill="#d8d080"/><rect x="1126" y="0" width="20" height="18" fill="#d8d0a0"/><rect x="1146" y="0" width="20" height="18" fill="#609840"/><rect x="1166" y="0" width="20" height="18" fill="#50d048"/><rect x="1186" y="0" width="20" height="18" fill="#98d048"/><rect x="1206" y="0" width="20" height="18" fill="#98d080"/><rect x="1226" y="0" width="20" height="18" fill="#286838"/><rect x="1246" y="0" width="20" height="18" fill="#009838"/><rect x="1266" y="0" width="20" height="18" fill="#00d040"/><rect x="1286" y="0" width="20" height="18" fill="#609870"/><rect x="1306" y="0" width="20" height="18" fill="#50d078"/><rect x="1326" y="0" width="20" height="18" fill="#98d0a0"/><rect x="1346" y="0" width="20" height="18" fill="#009870"/><rect x="1366" y="0" width="20" height="18" fill="#00d070"/><rect x="1386" y="0" width="20" height="18" fill="#00d0a0"/><rect x="1406" y="0" width="20" height="18" fill="#50d0a0"/><rect x="1426" y="0" width="20" height="18" fill="#286868"/><rect x="1446" y="0" width="20" height="18" fill="#009898"/><rect x="1466" y="0" width="20" height="18" fill="#00d0d0"/><rect x="1486" y="0" width="20" height="18" fill="#609898"/><rect x="1506" y="0" width="20" height="18" fill="#50d0d0"/><rect x="1526" y="0" width="20" height="18" fill="#98d0d0"/><rect x="1546" y="0" width="20" height="18" fill="#286898"/><rect x="1566" y="0" width="20" height="18" fill="#2868d0"/><rect x="1586" y="0" width="20" height="18" fill="#0098d0"/><rect x="1606" y="0" width="20" height="18" fill="#6098d0"/><rect x="1626" y="0" width="20" height="18" fill="#303068"/><rect x="1646" y="0" width="20" height="18" fill="#303898"/><rect x="1666" y="0" width="20" height="18" fill="#3038d0"/><rect x="1686" y="0" width="20" height="18" fill="#686898"/><rect x="1706" y="0" width="20" height="18" fill="#6868d0"/><rect x="1726" y="0" width="20" height="18" fill="#a0a0d0"/><rect x="1746" y="0" width="20" height="18" fill="#703898"/><rect x="1766" y="0" width="20" height="18" fill="#6838d0"/><rect x="1786" y="0" width="20" height="18" fill="#a038d0"/><rect x="1806" y="0" width="20" height="18" fill="#a068d0"/><rect x="1826" y="0" width="20" height="18" fill="#703068"/><rect x="1846" y="0" width="20" height="18" fill="#a03898"/><rect x="1866" y="0" width="20" height="18" fill="#a06898"/><rect x="1886" y="0" width="6" height="18" fill="#d038d0"/><path d="M46.5 17.5L65.5 0.5" stroke="#ff1a1a" stroke-width="1.2"/><path d="M66 18L86 18L86 8Z" fill="#000"/><path d="M75 18H86V9Z" fill="#444"/></svg>
<svg style="left:1893px;top:965px;" width="22" height="17" viewBox="0 0 22 17"><path d="M2 1H20V12H8L4 16V12H2Z" fill="#d8d8d8"/><path d="M5 4H17M5 6.5H17M5 9H14" stroke="#555" stroke-width="1"/></svg>
<div class="a" style="left:0;top:982px;width:1920px;height:2px;background:#1a1a1a"></div>
<div class="a" style="left:0;top:984px;width:1920px;height:1px;background:#6a6a6a"></div>
<div class="a" style="left:0;top:985px;width:1920px;height:95px;background:#245b82"></div>
<svg style="left:14px;top:990px;" width="64" height="75" viewBox="0 0 64 75"><path fill="#fff" d="M53 40c-.1-9.800 8-14.500 8.300-14.700-4.500-6.600-11.600-7.500-14.100-7.600-6-.6-11.700 3.500-14.800 3.500-3 0-7.700-3.400-12.700-3.300C13.300 18 7.300 21.800 4 27.700-2.700 39.300 2.300 56.500 8.800 65.900c3.200 4.600 7 9.800 12 9.600 4.800-.2 6.600-3.100 12.400-3.100s7.400 3.100 12.500 3c5.200-.1 8.400-4.700 11.600-9.300 3.600-5.300 5.100-10.500 5.200-10.800-.1 0-10-3.800-10.100-15.200zM43.300 11.600c2.600-3.200 4.400-7.600 3.900-12C43.500-.3 38.900 2.100 36.200 5.300c-2.400 2.800-4.500 7.300-3.900 11.600 4.100.3 8.400-2.100 11-5.300z"/></svg></svg>
<svg style="left:108px;top:997px;" width="66" height="66" viewBox="0 0 66 66"><rect x="0.5" y="0.5" width="65" height="65" rx="15" fill="#26282d"/><rect x="9" y="8.5" width="21" height="21" rx="5" fill="#2fb53d"/><circle cx="19.5" cy="19" r="7" fill="#d8dccf"/><rect x="36" y="8.5" width="21" height="21" rx="5" fill="#2f7fe0"/><rect x="40" y="14" width="13" height="9" rx="2" fill="#d8e2e6"/><rect x="9" y="35.5" width="21" height="21" rx="5" fill="#8a3fd8"/><path d="M19.5 39.5L21.8 44.3L27 44.8L23 48.2L24.2 53.3L19.5 50.6L14.8 53.3L16 48.2L12 44.8L17.2 44.3Z" fill="#e4dcf0"/><rect x="36" y="35.5" width="21" height="21" rx="5" fill="#e03535"/><path d="M43 40V52L53 46Z" fill="#f0dcdc"/></svg>
<svg style="left:195px;top:999px;" width="80" height="62" viewBox="0 0 80 62"><defs><linearGradient id="bw" x1="0" y1="0" x2="1" y2="1"><stop offset="0" stop-color="#00c8ea"/><stop offset="1" stop-color="#0078ee"/></linearGradient></defs><rect x="0" y="0" width="80" height="62" rx="7" fill="url(#bw)"/><path d="M7 0H73A7 7 0 0 1 80 7V11H0V7A7 7 0 0 1 7 0Z" fill="#ececec"/><circle cx="7" cy="6" r="2.2" fill="#222"/></svg>
<div class="a" style="left:233px;top:1074px;width:5px;height:5px;border-radius:3px;background:#9fb6cc"></div>
<div class="a" style="left:328px;top:999px;width:2px;height:62px;background:#f4f4f4;border-radius:1px"></div>
<svg style="left:389px;top:996px;" width="68" height="67" viewBox="0 0 68 67"><defs><linearGradient id="bf" x1="0" y1="0" x2="0" y2="1"><stop offset="0" stop-color="#22b8f2"/><stop offset="1" stop-color="#0062d2"/></linearGradient></defs><rect x="0.5" y="0.5" width="67" height="66" rx="15" fill="url(#bf)"/><rect x="6" y="5" width="56" height="5" fill="#8fe0ff"/><rect x="5" y="10" width="58" height="5" fill="#fff"/><rect x="4" y="15" width="60" height="2" fill="#b8ecff"/><g fill="#d6ecfb" opacity="0.9"><circle cx="40" cy="47" r="5"/><circle cx="51" cy="47" r="5"/><circle cx="40" cy="58" r="5"/><circle cx="51" cy="58" r="5"/></g></svg>
<div class="a" style="left:421px;top:1074px;width:5px;height:5px;border-radius:3px;background:#9fb6cc"></div>
<svg style="left:484px;top:996px;" width="66" height="67" viewBox="0 0 66 67"><defs><linearGradient id="eg" x1="0" y1="0" x2="1" y2="0.6"><stop offset="0" stop-color="#0cb8ec"/><stop offset="0.55" stop-color="#10c8b0"/><stop offset="1" stop-color="#34dc6c"/></linearGradient><linearGradient id="eb" x1="0" y1="0" x2="0" y2="1"><stop offset="0" stop-color="#1e96e2"/><stop offset="1" stop-color="#0a74cc"/></linearGradient></defs><rect x="0.5" y="0.5" width="65" height="66" rx="15" fill="#fff"/><path d="M8.8 36A24 24 0 0 1 56.8 33.5C56.8 39.5 52 42 46 42C40.5 42 37 40 37.5 37C38 33 36 29 31 28.5C20 28 12 31 8.8 36Z" fill="url(#eg)"/><path d="M8.8 36C12 31 20 27.5 31 28.5C25 31 22.5 38 24.5 45C27 53 35 57.5 44 57C38 59 26 59 18 53C11 48 8.5 42 8.8 36Z" fill="url(#eb)"/><path d="M31 28.5C27 31 25.5 35 26.5 40C28 48 35 52.5 42.5 52.5C47 52.5 51 50 53.5 45.5C49.5 52 42 57 35 57C28 56 23.5 50 23.5 43C23.5 36 26 31 31 28.5Z" fill="#0b5aa6"/><circle cx="32.5" cy="35" r="5.4" fill="#fff"/></svg>
<div class="a" style="left:515px;top:1074px;width:5px;height:5px;border-radius:3px;background:#9fb6cc"></div>
<svg style="left:571px;top:995px;" width="80" height="72" viewBox="0 0 80 72"><defs><linearGradient id="evg" x1="0" y1="0" x2="1" y2="1"><stop offset="0" stop-color="#a9da3a"/><stop offset="1" stop-color="#6c9e2a"/></linearGradient></defs><path d="M1 10.3L66 0.8Q69 0.3 69.8 3.5L79.8 53L8 67Z" fill="url(#evg)"/><path d="M1 10.3L11 9L18.5 66L8 67Z" fill="#1e6a1a"/><path d="M12 66.5L79.5 53.5L80 57L12.5 70Z" fill="#e8ece8"/><path d="M8 67L18.5 66L12.5 70.5L80 57.5L80 58.5L11 72Z" fill="#2a4a14"/><path d="M34 16C38 12 50 11 57 14C61 16 62 22 62 30C62 38 61 44 60 48C59 54 55 57 51 56C47 55 46 51 48 49C50 47 53 48 53 50C55 47 55 43 52 42C48 41 45 40 42 38C37 36 34 32 33 28C32 22 32 18 34 16Z" fill="#1b5a18"/><path d="M33.5 17L38 21L33 24Z" fill="#7aac30"/><ellipse cx="50.7" cy="27.7" rx="1.8" ry="1.3" fill="#9ccc40"/></svg>
<svg style="left:668px;top:992px;" width="72" height="78" viewBox="0 0 72 78"><defs><linearGradient id="pen" x1="0" y1="0" x2="1" y2="0"><stop offset="0" stop-color="#ffb040"/><stop offset="1" stop-color="#e07a10"/></linearGradient></defs><path d="M2.4 8.7L56.8 0.7L67.6 65.8L13.2 74.7Z" fill="#fbfbfb"/><path d="M2.4 8.7L56.8 0.7L58.4 12.6L4.2 20.4Z" fill="#f49a30"/><text x="8" y="17.5" font-family="Liberation Sans" font-size="6.5" fill="#fff" transform="rotate(-8 8 17)">PAGES</text><path d="M10.9 24.1L35.5 20.4L38.3 38.5L13.7 42.2Z" fill="#1a9ae8"/><path d="M20 27L31 25.5L27 36Z" fill="#f08a20"/><path d="M39 23L48 21.7M39.4 26L48.4 24.7M39.8 29L48.8 27.7M40.2 32L49.2 30.7M40.6 35L49.6 33.7M14.6 46L52 40.4M15 49L52.5 43.4M15.4 52L46 47.4M16.4 58L54 52.4M16.8 61L54.4 55.4M17.2 64L54.8 58.4" stroke="#9a9a9a" stroke-width="0.8"/><path d="M61.8 3.5L67.8 5L47.5 64L42 62.5Z" fill="url(#pen)"/><path d="M47.5 51L53 52.5L49.5 63.5L44 62Z" fill="#2a2a2a"/><path d="M44 62L49.5 63.5L42 75Z" fill="#c8d4dc"/><path d="M64 4.5L55 37" stroke="#ffe0a0" stroke-width="0.8" fill="none"/></svg>
<svg style="left:763px;top:995px;" width="73" height="69" viewBox="0 0 73 69"><path d="M2 39H72V66H0Z" fill="#f2f2f2"/><path d="M0 66H72V68H0Z" fill="#cfcfcf"/><rect x="11" y="35" width="13" height="26" rx="2" fill="#e8384a"/><rect x="26" y="21" width="12" height="40" rx="2" fill="#f6892a"/><rect x="40" y="1" width="12" height="60" rx="2" fill="#18b850"/><rect x="54" y="12" width="13" height="49" rx="2" fill="#1aa0ee"/></svg>
<svg style="left:859px;top:993px;" width="68" height="75" viewBox="0 0 68 75"><path d="M7 2H60L66 30H1Z" fill="#2a8fe6"/><path d="M1 30H66V33H1Z" fill="#1c6cc0"/><rect x="13" y="5" width="41" height="21" fill="#f4f4f4"/><circle cx="24" cy="16" r="6" fill="#4ac86a"/><path d="M24 16V10A6 6 0 0 1 30 16Z" fill="#e84a8a"/><path d="M36 10H48M36 14H48M36 18H48M36 22H48" stroke="#bbb" stroke-width="1"/><rect x="32" y="33" width="4" height="32" fill="#c8d0d8"/><ellipse cx="34" cy="68" rx="16" ry="5" fill="#b8c4cc"/></svg>
<svg style="left:950px;top:993px;" width="74" height="74" viewBox="0 0 74 74"><defs><linearGradient id="as" x1="0" y1="0" x2="0" y2="1"><stop offset="0" stop-color="#1ec0fa"/><stop offset="1" stop-color="#1670ee"/></linearGradient></defs><circle cx="37" cy="37" r="36" fill="#e8eef2"/><circle cx="37" cy="37" r="34" fill="url(#as)"/><path d="M33 13L53 50M41 13L21 50M13 42H61" stroke="#fff" stroke-width="5" stroke-linecap="round"/></svg>
<svg style="left:1044px;top:993px;" width="76" height="74" viewBox="0 0 76 74"><defs><linearGradient id="ml" x1="0" y1="0" x2="0" y2="1"><stop offset="0" stop-color="#0ee8c8"/><stop offset="1" stop-color="#36c0f2"/></linearGradient></defs><circle cx="37" cy="37" r="36" fill="#f2f4f4"/><circle cx="37" cy="37" r="34" fill="url(#ml)"/><rect x="16" y="25" width="42" height="26" fill="#fff"/><path d="M16 25L37 43L58 25M16 51L31 38M58 51L43 38" fill="none" stroke="url(#ml)" stroke-width="2.5"/></svg>
<div class="a" style="left:1110px;top:987px;width:17px;height:17px;border-radius:9px;background:#f01a1a"></div>
<div class="t" style="left:1112px;top:991px;font-size:8.5px;font-weight:bold;color:#fff;width:13px;text-align:center">16</div>
<div class="a" style="left:1078px;top:1073px;width:5px;height:5px;border-radius:3px;background:#9fb6cc"></div>
<svg style="left:1134px;top:993px;" width="80" height="72" viewBox="0 0 80 72"><path d="M45.4 11.8L78 14.8L77 49.4L34.5 45.5Z" fill="#f6ec98"/><path d="M24.6 44.5L66.2 44L67.2 65.3L25.6 68.2Z" fill="#f4e690"/><path d="M2.8 11.8L43.4 2.9L52.3 36.6L12.7 48.4Z" fill="#f9efa0"/><path d="M12.7 48.4L52.3 36.6L52.8 38L13.2 49.6Z" fill="#d8c870" opacity="0.7"/><text x="12" y="30" font-family="Liberation Sans" font-size="7" fill="#4a4a50" transform="rotate(-14 20 28)">555-7361</text><text x="16" y="18" font-family="Liberation Sans" font-size="5" fill="#4a4a50" transform="rotate(-14 20 18)">Lou</text><path d="M10 37L48 27M11 39L49 29" stroke="#555" stroke-width="0.7"/><text x="54" y="30" font-family="Liberation Sans" font-size="7.5" fill="#e8302a" transform="rotate(5 54 30)">Eggs</text><text x="35" y="60" font-family="Liberation Sans" font-size="7" font-style="italic" fill="#3a3a6a">Milk</text></svg>
<div class="a" style="left:1172px;top:1073px;width:5px;height:5px;border-radius:3px;background:#9fb6cc"></div>
<svg style="left:1228px;top:1001px;" width="82" height="57" viewBox="0 0 82 57"><defs><linearGradient id="sr" x1="0" y1="0" x2="1" y2="1"><stop offset="0" stop-color="#e02a48"/><stop offset="0.5" stop-color="#9a2aa8"/><stop offset="1" stop-color="#3a3ad8"/></linearGradient></defs><rect x="0" y="0" width="82" height="57" rx="2" fill="#111"/><rect x="3" y="3" width="76" height="51" fill="url(#sr)"/><path d="M7 13V7H13M69 7H75V13M7 44V50H13M75 44V50H69" fill="none" stroke="#fff" stroke-width="1.5"/><rect x="30" y="24" width="16" height="11" rx="1.5" fill="#fff"/><path d="M46 28L52 25V34L46 31Z" fill="#fff"/><rect x="34" y="20" width="8" height="3" fill="#fff"/></svg>
<div class="a" style="left:1266px;top:1073px;width:5px;height:5px;border-radius:3px;background:#9fb6cc"></div>
<svg style="left:1322px;top:990px;" width="82" height="76" viewBox="0 0 82 76"><defs><linearGradient id="or" x1="0" y1="0" x2="0" y2="1"><stop offset="0" stop-color="#ff9c30"/><stop offset="1" stop-color="#ff7c14"/></linearGradient><linearGradient id="pl" x1="0" y1="0" x2="1" y2="1"><stop offset="0" stop-color="#fff4ec"/><stop offset="1" stop-color="#e8ddd6"/></linearGradient></defs><rect x="7" y="6" width="67" height="68" rx="17" fill="url(#or)"/><path d="M28 30Q34 46 45 54Q50 56 56 50L78 28Q82 21 74 21L50 25Q42 40 28 30Z" fill="url(#pl)"/><path d="M28 30Q38 28 50 25Q42 40 28 30Z" fill="#f8d8c0"/><path d="M5 21.7H17M29 21.7H42M23 3V15.5M23 28V40" stroke="#ffd21e" stroke-width="5" stroke-linecap="round"/><circle cx="23" cy="21.7" r="4.5" fill="#fff6e8"/></svg>
<div class="a" style="left:1360px;top:1073px;width:5px;height:5px;border-radius:3px;background:#9fb6cc"></div>
<svg style="left:1428px;top:992px;" width="60" height="79" viewBox="0 0 60 79"><defs><pattern id="mesh" width="4" height="4" patternUnits="userSpaceOnUse"><rect width="4" height="4" fill="#3a3a3a"/><path d="M2 0.4L3.6 2L2 3.6L0.4 2Z" fill="#d0d0d0"/></pattern><linearGradient id="tsh" x1="0" y1="0" x2="1" y2="0"><stop offset="0" stop-color="#000" stop-opacity="0.35"/><stop offset="0.4" stop-color="#fff" stop-opacity="0.15"/><stop offset="1" stop-color="#000" stop-opacity="0.45"/></linearGradient></defs><path d="M3 13L57 13L51 72L9 72Z" fill="url(#mesh)"/><path d="M3 13L57 13L51 72L9 72Z" fill="url(#tsh)"/><path d="M6 12C8 4 14 2 20 5C24 0 32 1 36 4C42 1 50 3 54 11L30 16Z" fill="#f0f0f0"/><path d="M14 9L20 5L24 10M34 5L40 9L46 6" fill="none" stroke="#c8c8c8" stroke-width="1"/><ellipse cx="30" cy="13" rx="27" ry="3.5" fill="none" stroke="#d8d8d8" stroke-width="2"/><ellipse cx="30" cy="72" rx="21" ry="4.5" fill="#b8b8b8"/><ellipse cx="30" cy="71" rx="20" ry="3" fill="#888"/></svg>
<div class="a" style="left:1595px;top:45px;width:325px;height:918px;background:#2b2b2b"></div>
<div class="a" style="left:1599px;top:45px;width:318px;height:120px;background:#434343;border-radius:6px;overflow:hidden;box-shadow:0 0 0 1px #1f1f1f"><div class="a" style="left:0;top:0;width:318px;height:24px;background:#373737"></div><div class="a" style="left:0;top:24px;width:318px;height:1px;background:#7a7a7a"></div><div class="a" style="left:44px;top:3px;width:66px;height:23px;background:#434343;border:1px solid #585858;border-bottom:none;border-radius:6px 6px 0 0"></div></div>
<div class="a" style="left:1608px;top:50px;width:14px;height:14px;border-radius:7px;background:#6b6b6b"></div>
<svg style="left:1611px;top:53px;" width="8" height="8" viewBox="0 0 8 8"><path d="M1 1L7 7M7 1L1 7" stroke="#1c1c1c" stroke-width="1.3"/></svg>
<div class="a" style="left:1631px;top:51px;width:1.5px;height:13px;background:#5e5e5e"></div>
<div class="a" style="left:1635px;top:51px;width:1.5px;height:13px;background:#5e5e5e"></div>
<svg style="left:1894px;top:49px;" width="16" height="17" viewBox="0 0 16 17"><rect x="0.6" y="0.6" width="14.8" height="15.8" rx="3" fill="none" stroke="#bdbdbd" stroke-width="1.1"/><path d="M3.5 4.8H12.5M3.5 8.5H12.5M3.5 12.2H12.5" stroke="#bdbdbd" stroke-width="1.1"/></svg>
<svg style="left:1647px;top:53px;" width="8" height="11" viewBox="0 0 8 11"><path d="M1 4L4 1L7 4M1 7L4 10L7 7" fill="none" stroke="#eee" stroke-width="1.1"/></svg>
<div class="t" style="left:1658px;top:54px;font-size:11.8px;color:#f4f4f4">Color</div>
<div class="a" style="left:1691px;top:52px;width:12px;height:12px;border-radius:6px;background:#6b6b6b"></div>
<svg style="left:1694px;top:55px;" width="6" height="6" viewBox="0 0 6 6"><path d="M0.5 0.5L5.5 5.5M5.5 0.5L0.5 5.5" stroke="#1c1c1c" stroke-width="1.1"/></svg>
<div class="a" style="left:1625px;top:86px;width:30px;height:30px;background:#fff;border:1px solid #ddd"></div>
<div class="a" style="left:1633px;top:94px;width:14px;height:14px;background:#434343"></div>
<svg style="left:1645px;top:86px;" width="10" height="10" viewBox="0 0 10 10"><path d="M1.5 8L8.5 1" stroke="#ff2020" stroke-width="1"/></svg>
<div class="a" style="left:1609px;top:102px;width:30px;height:30px;background:#cfcfcf;border:1px solid #e8e8e8"></div>
<svg style="left:1609px;top:86px;" width="15" height="15" viewBox="0 0 15 15"><path d="M3.5 12V8A3.5 3.5 0 0 1 7 4.5H11" fill="none" stroke="#eee" stroke-width="1.3"/><path d="M10.5 2L13.5 4.5L10.5 7Z M1 11.5L3.5 14.5L6 11.5Z" fill="#eee"/></svg>
<div class="t" style="left:1663px;top:93px;font-size:11.5px;color:#eee">R</div>
<div class="t" style="left:1663px;top:118px;font-size:11.5px;color:#eee">G</div>
<div class="a" style="left:1693px;top:94px;width:168px;height:7px;background:linear-gradient(90deg,#1a22ff,#9a2cf0 50%,#ff2ef5)"></div>
<div class="a" style="left:1693px;top:120px;width:168px;height:7px;background:linear-gradient(90deg,#1628ff,#0a90ff 50%,#00ffff)"></div>
<div class="a" style="left:1680px;top:91px;width:13px;height:13px;border-radius:7px;background:#d4d4d4;box-shadow:0 0 0 1px #333"></div>
<div class="a" style="left:1680px;top:117px;width:13px;height:13px;border-radius:7px;background:#d4d4d4;box-shadow:0 0 0 1px #333"></div>
<div class="a" style="left:1865px;top:86px;width:42px;height:22px;background:#313131"></div>
<div class="a" style="left:1865px;top:112px;width:42px;height:22px;background:#313131"></div>
<div class="t" style="left:1869px;top:92px;font-size:11.5px;color:#f4f4f4">0.0</div>
<div class="t" style="left:1869px;top:118px;font-size:11.5px;color:#f4f4f4">0.0</div>
<div class="a" style="left:1599px;top:600px;width:318px;height:98px;background:#434343;border-radius:0 0 7px 7px;box-shadow:0 0 0 1px #1f1f1f"></div>
<svg style="left:1637px;top:676px;" width="18" height="12" viewBox="0 0 18 12"><path d="M2 6H10M10 6A3 3 0 1 0 16 6" fill="none" stroke="#888" stroke-width="1.3"/></svg>
<svg style="left:1665px;top:676px;" width="18" height="12" viewBox="0 0 18 12"><rect x="3" y="2" width="12" height="8" fill="none" stroke="#888" stroke-width="1.3"/></svg>
<svg style="left:1693px;top:676px;" width="18" height="12" viewBox="0 0 18 12"><circle cx="9" cy="2" r="7" fill="#777"/></svg>
<svg style="left:1721px;top:676px;" width="18" height="12" viewBox="0 0 18 12"><rect x="3" y="0" width="13" height="10" fill="none" stroke="#888" stroke-width="1.3"/></svg>
<svg style="left:1749px;top:676px;" width="18" height="12" viewBox="0 0 18 12"><rect x="2" y="2" width="13" height="8" fill="none" stroke="#888" stroke-width="1.3"/></svg>
<svg style="left:1777px;top:676px;" width="18" height="12" viewBox="0 0 18 12"><rect x="2" y="0" width="15" height="10" rx="1" fill="none" stroke="#bbb" stroke-width="1.1"/><path d="M6 4L8 2L10 4" stroke="#bbb" fill="none"/></svg>
<svg style="left:1805px;top:676px;" width="18" height="12" viewBox="0 0 18 12"><rect x="0" y="-4" width="18" height="12" rx="3" fill="#eee"/><circle cx="9" cy="0" r="3" fill="#444"/></svg>
<svg style="left:1833px;top:676px;" width="18" height="12" viewBox="0 0 18 12"><rect x="2" y="-2" width="12" height="11" fill="#eee"/><path d="M8 1V7" stroke="#444" stroke-width="2"/><circle cx="16.5" cy="2" r="1.8" fill="#eee"/></svg>
<svg style="left:1861px;top:676px;" width="18" height="12" viewBox="0 0 18 12"><rect x="0" y="-3" width="18" height="11" rx="3" fill="#6a6a6a"/></svg>
<svg style="left:1889px;top:676px;" width="18" height="12" viewBox="0 0 18 12"><path d="M4 0V10H14V0M6 2V8M9 2V8M12 2V8" fill="none" stroke="#777" stroke-width="1.1"/></svg>
<div class="a" style="left:1599px;top:700px;width:318px;height:260px;background:#434343;border-radius:6px;overflow:hidden;box-shadow:0 0 0 1px #1f1f1f"><div class="a" style="left:0;top:0;width:318px;height:23px;background:#373737"></div><div class="a" style="left:0;top:23px;width:318px;height:1px;background:#7a7a7a"></div><div class="a" style="left:44px;top:3px;width:100px;height:22px;background:#434343;border:1px solid #585858;border-bottom:none;border-radius:6px 6px 0 0"></div></div>
<div class="a" style="left:1608px;top:705px;width:14px;height:14px;border-radius:7px;background:#6b6b6b"></div>
<svg style="left:1611px;top:708px;" width="8" height="8" viewBox="0 0 8 8"><path d="M1 1L7 7M7 1L1 7" stroke="#1c1c1c" stroke-width="1.3"/></svg>
<div class="a" style="left:1631px;top:706px;width:1.5px;height:13px;background:#5e5e5e"></div>
<div class="a" style="left:1635px;top:706px;width:1.5px;height:13px;background:#5e5e5e"></div>
<svg style="left:1894px;top:704px;" width="16" height="17" viewBox="0 0 16 17"><rect x="0.6" y="0.6" width="14.8" height="15.8" rx="3" fill="none" stroke="#bdbdbd" stroke-width="1.1"/><path d="M3.5 4.8H12.5M3.5 8.5H12.5M3.5 12.2H12.5" stroke="#bdbdbd" stroke-width="1.1"/></svg>
<div class="t" style="left:1658px;top:708px;font-size:11.8px;color:#f4f4f4;letter-spacing:-0.1px">Appearance</div>
<div class="a" style="left:1726px;top:706px;width:13px;height:13px;border-radius:7px;background:#6b6b6b"></div>
<svg style="left:1729px;top:709px;" width="7" height="7" viewBox="0 0 7 7"><path d="M0.5 0.5L6.5 6.5M6.5 0.5L0.5 6.5" stroke="#1c1c1c" stroke-width="1.1"/></svg>
<svg style="left:1621px;top:744px;" width="10" height="8" viewBox="0 0 10 8"><path d="M0 0H10L5 8Z" fill="#e0e0e0"/></svg>
<svg style="left:1642px;top:737px;" width="20" height="20" viewBox="0 0 20 20"><rect x="0" y="0" width="5" height="5" fill="#d0d0d0"/><rect x="0" y="5" width="5" height="5" fill="#8c8c8c"/><rect x="0" y="10" width="5" height="5" fill="#d0d0d0"/><rect x="0" y="15" width="5" height="5" fill="#8c8c8c"/><rect x="5" y="0" width="5" height="5" fill="#8c8c8c"/><rect x="5" y="5" width="5" height="5" fill="#d0d0d0"/><rect x="5" y="10" width="5" height="5" fill="#8c8c8c"/><rect x="5" y="15" width="5" height="5" fill="#d0d0d0"/><rect x="10" y="0" width="5" height="5" fill="#d0d0d0"/><rect x="10" y="5" width="5" height="5" fill="#8c8c8c"/><rect x="10" y="10" width="5" height="5" fill="#d0d0d0"/><rect x="10" y="15" width="5" height="5" fill="#8c8c8c"/><rect x="15" y="0" width="5" height="5" fill="#8c8c8c"/><rect x="15" y="5" width="5" height="5" fill="#d0d0d0"/><rect x="15" y="10" width="5" height="5" fill="#8c8c8c"/><rect x="15" y="15" width="5" height="5" fill="#d0d0d0"/></svg>
<div class="t" style="left:1669px;top:741px;font-size:11.8px;color:#f0f0f0;letter-spacing:-0.2px">Default Style</div>
<div class="t" style="left:1652px;top:769px;font-size:11.8px;color:#f0f0f0">Fill</div>
<svg style="left:1825px;top:769px;" width="14" height="14" viewBox="0 0 14 14"><rect x="0.5" y="0.5" width="13" height="13" fill="#bbb" stroke="#eee" stroke-width="1"/><circle cx="7" cy="7" r="5" fill="#222"/></svg>
<div class="a" style="left:1846px;top:765px;width:23px;height:22px;background:#cfcfcf;border:2px solid #383838;border-radius:2px"></div>
<svg style="left:1874px;top:769px;" width="16" height="12" viewBox="0 0 16 12"><path d="M1 6C4 1.5 12 1.5 15 6C12 10.5 4 10.5 1 6Z" fill="none" stroke="#eee" stroke-width="1.2"/><circle cx="8" cy="6" r="2" fill="none" stroke="#eee" stroke-width="1.2"/></svg>
<div class="a" style="left:1896px;top:734px;width:11px;height:172px;border-radius:6px;background:#8a8a8a;border:1px solid #333"></div>
<div class="a" style="left:1609px;top:918px;width:299px;height:1px;background:#2e2e2e"></div>
<svg style="left:1609px;top:928px;" width="18" height="18" viewBox="0 0 18 18"><rect x="1" y="2" width="16" height="14" rx="3" fill="#f4f4f4"/><path d="M9 5V13M5 9H13" stroke="#555" stroke-width="1.5"/></svg>
<svg style="left:1637px;top:928px;" width="18" height="18" viewBox="0 0 18 18"><rect x="1.5" y="1.5" width="15" height="15" rx="3" fill="none" stroke="#f4f4f4" stroke-width="1.4"/><path d="M9 5V13M5 9H13" stroke="#f4f4f4" stroke-width="1.6"/></svg>
<svg style="left:1665px;top:928px;" width="18" height="18" viewBox="0 0 18 18"><path d="M15.5 1L4 11L2 15L6 14L15.5 3Z" fill="#f4f4f4"/><path d="M13 10V18M9 14H17" stroke="#f4f4f4" stroke-width="1.6"/></svg>
<svg style="left:1693px;top:928px;" width="18" height="18" viewBox="0 0 18 18"><circle cx="9" cy="9" r="6" fill="none" stroke="#ddd" stroke-width="1.1"/><path d="M9 5.5V12.5M5.5 9H12.5" stroke="#aaa" stroke-width="1.4"/><path d="M5 1.5V3M13 1.5V3M5 15V16.5M13 15V16.5M1 6V7.5M17 6V7.5M1 11V12.5M17 11V12.5" stroke="#ddd" stroke-width="1.4"/></svg>
<svg style="left:1721px;top:928px;" width="18" height="18" viewBox="0 0 18 18"><rect x="1" y="1" width="16" height="16" fill="none" stroke="#aaa" stroke-width="1"/><text x="3" y="13" font-family="Liberation Serif" font-style="italic" font-size="11" fill="#ddd">fx</text></svg>
<svg style="left:1750px;top:928px;" width="18" height="18" viewBox="0 0 18 18"><path d="M1 6.5Q1 4.5 3 4.5H5L6.5 1.5H11.5L13 4.5H15Q17 4.5 17 6.5V14.5Q17 16.5 15 16.5H3Q1 16.5 1 14.5Z" fill="#f4f4f4"/><circle cx="9" cy="10" r="3.6" fill="none" stroke="#434343" stroke-width="1.8"/></svg>
<svg style="left:1804px;top:928px;" width="18" height="18" viewBox="0 0 18 18"><path d="M4 6V15A2 2 0 0 0 6 17H14" fill="none" stroke="#7a7a7a" stroke-width="1.5"/><rect x="7.5" y="1" width="10" height="12" rx="2" fill="none" stroke="#7a7a7a" stroke-width="1.5"/><path d="M12.5 3.5V10.5M9 7H16" stroke="#7a7a7a" stroke-width="1.8"/></svg>
<svg style="left:1832px;top:928px;" width="18" height="18" viewBox="0 0 18 18"><circle cx="9" cy="9" r="8.3" fill="none" stroke="#f4f4f4" stroke-width="1.3"/><path d="M5.5 5.5L12.5 12.5M12.5 5.5L5.5 12.5" stroke="#f4f4f4" stroke-width="1.3"/></svg>
<svg style="left:1860px;top:928px;" width="18" height="18" viewBox="0 0 18 18"><path d="M1.5 10A7 7 0 0 1 10.5 2.8M16.5 8A7 7 0 0 1 7.5 15.2" fill="none" stroke="#f4f4f4" stroke-width="2"/><path d="M17.5 0.5L11.5 6.5M0.5 17.5L6.5 11.5" stroke="#f4f4f4" stroke-width="2"/><path d="M10 3L10.5 8L15.5 7.5Z M8 15L7.5 10L2.5 10.5Z" fill="#f4f4f4"/></svg>
<svg style="left:1888px;top:928px;" width="18" height="18" viewBox="0 0 18 18"><path d="M1 3.5H17M6.5 3.5V1.5H11.5V3.5M3.3 5L4.5 17H13.5L14.7 5Z" fill="none" stroke="#f4f4f4" stroke-width="1.3"/><path d="M7 6.5V15M9 6.5V15M11 6.5V15" stroke="#bbb" stroke-width="1.1"/></svg>
<div class="a" style="left:32px;top:138px;width:1900px;height:542px;background:#434343;border:1px solid #141414;border-radius:5px;box-shadow:0 4px 22px rgba(0,0,0,0.28)"></div>
<div class="a" style="left:0;top:23px;width:1920px;height:30px;border-top:1px solid #777;border-left:1px solid #5a5a5a;border-right:1px solid #666;border-radius:6px 6px 0 0;border-bottom:none"></div>
<div class="a" style="left:1919px;top:45px;width:1px;height:93px;background:#262626"></div>
<div class="a" style="left:103px;top:139px;width:1px;height:539px;background:#4a4a4a"></div>
<div class="a" style="left:44px;top:142px;width:28px;height:28px;border-radius:4px;background:radial-gradient(circle at 55% 45%,#3b92c4,#2b73a2)"></div>
<div class="a" style="left:72px;top:208px;width:28px;height:28px;border-radius:4px;background:#2f2f2f"></div>
<div class="a" style="left:46px;top:244px;width:52px;height:1px;background:#1c1c1c"></div>
<div class="a" style="left:46px;top:245px;width:52px;height:1px;background:#555"></div>
<div class="a" style="left:46px;top:420px;width:52px;height:1px;background:#1c1c1c"></div>
<div class="a" style="left:46px;top:421px;width:52px;height:1px;background:#555"></div>
<div class="a" style="left:46px;top:496px;width:52px;height:1px;background:#1c1c1c"></div>
<div class="a" style="left:46px;top:497px;width:52px;height:1px;background:#555"></div>
<div class="a" style="left:46px;top:606px;width:52px;height:1px;background:#1c1c1c"></div>
<div class="a" style="left:46px;top:607px;width:52px;height:1px;background:#555"></div>
<svg style="left:44px;top:142px;" width="28" height="28" viewBox="0 0 28 28"><path d="M9.3 5.5L20.2 15.6L15.3 16.1L18.6 22.6L16.4 23.7L13.2 17.3L9.6 20.8Z" fill="#ececec"/></svg>
<svg style="left:72px;top:142px;" width="28" height="28" viewBox="0 0 28 28"><path d="M7.5 20.5C7.5 15 9 11.5 11 10.2C13.5 8.5 17 7.6 20.3 7.2" fill="none" stroke="#ddd" stroke-width="1.2"/><path d="M10.6 10.3L17.8 14.3L14.2 17.6Z" fill="#ddd"/><rect x="9" y="8.5" width="3.4" height="3.4" fill="#ddd"/><rect x="5.8" y="19" width="3.4" height="3.4" fill="#ddd"/><rect x="18.6" y="5.6" width="3.4" height="3.4" fill="#ddd"/></svg>
<svg style="left:44px;top:175px;" width="28" height="28" viewBox="0 0 28 28"><path d="M5.2 18.5A13 13 0 0 1 18.5 5.2" fill="none" stroke="#ddd" stroke-width="1.2"/><path d="M13.3 11.3L19.3 18.2L16.4 18.4L18.2 22.4L16.8 23.2L15 19.1L13.5 21.3Z" fill="#ddd"/></svg>
<svg style="left:72px;top:175px;" width="28" height="28" viewBox="0 0 28 28"><path d="M6 6.6L21.5 12M6 6.6L11.4 21.3" stroke="#ddd" stroke-width="1"/><circle cx="6" cy="6.6" r="1.9" fill="#444" stroke="#ddd"/><circle cx="21.5" cy="12" r="1.9" fill="#444" stroke="#ddd"/><circle cx="11.4" cy="21.3" r="1.9" fill="#444" stroke="#ddd"/><path d="M26.5 20.5V26.5H20.5Z" fill="#c8c8c8"/></svg>
<svg style="left:44px;top:208px;" width="28" height="28" viewBox="0 0 28 28"><path transform="translate(16.6 16.4) rotate(-45)" d="M-6.3 -7V0A6.3 6.3 0 0 0 6.3 0V-7H2.3V0A2.3 2.3 0 0 1 -2.3 0V-7Z" fill="#e8e8e8"/><path d="M9.5 4.5L11.5 7M12 5L9.2 7.8M5 9.5L7 12M7.5 10L4.7 12.8" stroke="#e8e8e8" stroke-width="1.3"/><path d="M26.5 20.5V26.5H20.5Z" fill="#c8c8c8"/></svg>
<svg style="left:72px;top:208px;" width="28" height="28" viewBox="0 0 28 28"><rect x="5" y="6.5" width="18" height="14.5" fill="none" stroke="#e6e6e6" stroke-width="1.6" stroke-dasharray="3 2"/><path d="M26.5 20.5V26.5H20.5Z" fill="#c8c8c8"/></svg>
<svg style="left:44px;top:252px;" width="28" height="28" viewBox="0 0 28 28"><path d="M4.3 10.3Q9 16 17.5 22.5" fill="none" stroke="#bdbdbd" stroke-width="1.1"/><path d="M9.6 7Q8 13 11 18Q13 21.5 15 24" fill="none" stroke="#d0d0d0" stroke-width="1.1"/><path d="M13 10.3L17.3 8.3L20.2 11.2L18.5 15.3L11 17Z" fill="#e4e4e4"/><path d="M17.6 7L19.9 4.4L24.2 8.7L21.6 11Z" fill="#dcdcdc"/><circle cx="15.6" cy="12.7" r="0.9" fill="#444"/><path d="M11 17L15.2 13" stroke="#555" stroke-width="0.6"/></svg>
<svg style="left:72px;top:252px;" width="28" height="28" viewBox="0 0 28 28"><path d="M6.3 21.7L21.6 6.2" stroke="#ddd" stroke-width="1"/><circle cx="5.8" cy="22" r="1.7" fill="#444" stroke="#ddd"/><circle cx="22" cy="6" r="1.7" fill="#444" stroke="#ddd"/></svg>
<svg style="left:44px;top:284px;" width="28" height="28" viewBox="0 0 28 28"><path d="M7.3 6.2C9 8.5 9 12 7 15C5.5 17.5 5 20.5 6.8 22.8" fill="none" stroke="#e8e8e8" stroke-width="1.1"/><path d="M22.8 7.3L10.2 19.9" stroke="#ececec" stroke-width="3.4"/><path d="M8.5 18.2L11.8 21.5L6.4 23.6Z" fill="#ececec"/><path d="M21 8.4L22.6 10" stroke="#444" stroke-width="0.6"/><path d="M9.6 18.6L11 20" stroke="#444" stroke-width="0.6"/></svg>
<svg style="left:72px;top:284px;" width="28" height="28" viewBox="0 0 28 28"><path d="M22.2 5.3L23.4 6.5L13 18.7L10.7 16.5Z" fill="#e8e8e8"/><path d="M10.4 16.2L13.2 19C12 22 8.5 24 5 24C6 20.5 8 17.5 10.4 16.2Z" fill="#e8e8e8"/><path d="M10.6 16.4L13 18.8" stroke="#444" stroke-width="0.6"/></svg>
<svg style="left:44px;top:317px;" width="28" height="28" viewBox="0 0 28 28"><rect x="5.7" y="10.5" width="17" height="15" rx="2.5" fill="#7a7a7a" stroke="#e0e0e0" stroke-width="1.5" transform="translate(0,-2.3)"/><path d="M26.5 20.5V26.5H20.5Z" fill="#c8c8c8"/></svg>
<svg style="left:72px;top:317px;" width="28" height="28" viewBox="0 0 28 28"><path d="M10.5 6.5C12 7.5 11 9 10.5 10C12 11 10.5 13 9.5 14.5C11 15.5 10 17 9 18.5L6.5 22.5C4.5 21 4 18 6 15C7 13 8.5 11.5 9 9.5C9 8 9.5 7 10.5 6.5Z" fill="#8a8a8a" stroke="#d8d8d8" stroke-width="0.8"/><path d="M22.6 7L11 18.6" stroke="#ececec" stroke-width="3.2"/><path d="M9.5 17.2L12.4 20.1L7 22.5Z" fill="#ececec"/><path d="M21.2 8L22.6 9.4" stroke="#444" stroke-width="0.6"/></svg>
<svg style="left:44px;top:351px;" width="28" height="28" viewBox="0 0 28 28"><path d="M5.5 7.5H22.5V12H21C20.5 10 20 9.5 18 9.5H15.8V20.8C15.8 21.8 16.5 22 18.5 22V23.5H9.5V22C11.5 22 12.2 21.8 12.2 20.8V9.5H10C8 9.5 7.5 10 7 12H5.5Z" fill="#e8e8e8"/><path d="M26.5 20.5V26.5H20.5Z" fill="#c8c8c8"/></svg>
<svg style="left:72px;top:351px;" width="28" height="28" viewBox="0 0 28 28"><rect x="4" y="9" width="9.5" height="12.5" fill="#7a7a7a" stroke="#d8d8d8" stroke-width="0.8"/><path d="M11 11A6.3 6.3 0 1 1 22 16L13 11Z" fill="#7a7a7a" stroke="#d8d8d8" stroke-width="0.8"/><path d="M11 11.2L22.6 15.4L17.8 16.8L15.2 22.3Z" fill="#eee"/><path d="M26.5 20.5V26.5H20.5Z" fill="#c8c8c8"/></svg>
<svg style="left:44px;top:384px;" width="28" height="28" viewBox="0 0 28 28"><path d="M5 22C6 16 10 12 14 10C18 8 21 6 23.5 4.5C23 10 20 15 15 18C11 20.5 7 21 5 22Z" fill="#aaa" stroke="#ddd" stroke-width="0.9"/><path d="M6.5 7.5L15 14L18.5 22" stroke="#ddd" stroke-width="0.8" fill="none"/><circle cx="6.5" cy="7.5" r="1.4" fill="#555" stroke="#ddd" stroke-width="0.7"/><circle cx="15" cy="14" r="1.4" fill="#555" stroke="#ddd" stroke-width="0.7"/><circle cx="18.5" cy="19.5" r="1.4" fill="#555" stroke="#ddd" stroke-width="0.7"/><path d="M26.5 20.5V26.5H20.5Z" fill="#c8c8c8"/></svg>
<svg style="left:44px;top:428px;" width="28" height="28" viewBox="0 0 28 28"><path d="M4 6C8 5 11 6 13 8C16 10 19 13 22 14C20 17 18 20 17 23C12 22 9 20 6 16C7 12 6 9 4 6Z" fill="#707070" stroke="#999" stroke-width="0.6"/><path d="M6 9L20 17M5 13L18 21M9 7L7 19M13 8L11 21M17 11L15 22" stroke="#9a9a9a" stroke-width="0.5"/><path d="M22.8 5L15.5 14.5" stroke="#eee" stroke-width="2"/><circle cx="14.8" cy="15.2" r="1.8" fill="#eee"/><path d="M26.5 20.5V26.5H20.5Z" fill="#c8c8c8"/></svg>
<svg style="left:72px;top:428px;" width="28" height="28" viewBox="0 0 28 28"><path d="M4.5 8C9 6.5 16 5.5 23.5 6.5C24 11 24 17 23.5 21.5C16 22.5 9 22 4.5 21.5C4 17 4 12 4.5 8Z" fill="#7a7a7a" stroke="#d8d8d8" stroke-width="1.2"/><path d="M8 19L20 9" stroke="#ccc" stroke-width="1"/><path d="M26.5 20.5V26.5H20.5Z" fill="#c8c8c8"/></svg>
<svg style="left:44px;top:460px;" width="28" height="28" viewBox="0 0 28 28"><path d="M5 8L7 7L9 8L11 7L13 8L15 7L17 8L19 7L21 8L22 10L23 12L22 14L23 16L22 18L21 20L19 21L17 20L15 21L13 20L11 21L9 20L7 21L5 20L4.5 18L5.5 16L4.5 14L5.5 12L4.5 10Z" fill="#7a7a7a" stroke="#ddd" stroke-width="1" stroke-dasharray="1.5 0.8"/><path d="M26.5 20.5V26.5H20.5Z" fill="#c8c8c8"/></svg>
<svg style="left:72px;top:460px;" width="28" height="28" viewBox="0 0 28 28"><path d="M4 9.5Q14 4.5 24 9.5L21 20Q14 17.5 7 20Z" fill="none" stroke="#ccc" stroke-width="0.9"/><path d="M5.5 14.5Q14 10.5 22.5 14.5M10 8L11 18.6M14 7.2V18M18 8L17 18.6" stroke="#ccc" stroke-width="0.8" fill="none"/><path d="M14 6.5V18.5" stroke="#eee" stroke-width="2"/><path d="M26.5 20.5V26.5H20.5Z" fill="#c8c8c8"/></svg>
<svg style="left:44px;top:505px;" width="28" height="28" viewBox="0 0 28 28"><defs><linearGradient id="gsq" x1="0" y1="0.8" x2="1" y2="0.2"><stop offset="0" stop-color="#e0e0e0"/><stop offset="0.55" stop-color="#6a6a6a"/><stop offset="1" stop-color="#3a3a3a"/></linearGradient></defs><rect x="3.8" y="5" width="19.7" height="19.7" fill="url(#gsq)"/><path d="M4.3 5V24.7" stroke="#f4f4f4" stroke-width="1"/><path d="M26.5 20.5V26.5H20.5Z" fill="#c8c8c8"/></svg>
<svg style="left:72px;top:505px;" width="28" height="28" viewBox="0 0 28 28"><rect x="4.5" y="5.5" width="19" height="18.5" rx="1.5" fill="none" stroke="#e0e0e0" stroke-width="1.2"/><path d="M5 9Q14 8 23 12M5 17Q13 15 23 18M9 5.5Q11 14 8 24M17 5.5Q15 15 18 24" fill="none" stroke="#ddd" stroke-width="0.9"/><path d="M26.5 20.5V26.5H20.5Z" fill="#c8c8c8"/></svg>
<svg style="left:44px;top:538px;" width="28" height="28" viewBox="0 0 28 28"><rect x="4" y="4" width="19.5" height="19.5" fill="#e8e8e8"/><path d="M4 7.5H23.5M4 11.5H23.5M4 15.5H23.5M4 19.5H23.5M9 4V7.5M16 4V7.5M6 7.5V11.5M12.5 7.5V11.5M19.5 7.5V11.5M9 11.5V15.5M16 11.5V15.5M6 15.5V19.5M12.5 15.5V19.5M19.5 15.5V19.5M9 19.5V23.5M16 19.5V23.5" stroke="#555" stroke-width="1"/><path d="M26.5 20.5V26.5H20.5Z" fill="#c8c8c8"/></svg>
<svg style="left:72px;top:538px;" width="28" height="28" viewBox="0 0 28 28"><rect x="4.5" y="4" width="19.5" height="19.5" rx="4" fill="#777" stroke="#c8c8c8" stroke-width="1"/><rect x="8" y="7.5" width="12.5" height="12.5" rx="1.5" fill="#969696"/><rect x="10.5" y="10" width="7.5" height="7.5" fill="#c8c8c8"/></svg>
<svg style="left:44px;top:571px;" width="28" height="28" viewBox="0 0 28 28"><rect x="4" y="4.3" width="12.3" height="12" fill="#777" stroke="#ddd" stroke-width="0.9"/><rect x="8" y="8" width="12.5" height="12.5" rx="2" fill="#777" stroke="#ddd" stroke-width="0.9"/><circle cx="17.9" cy="17" r="6" fill="#7a7a7a" stroke="#ddd" stroke-width="0.9"/><path d="M26.5 20.5V26.5H20.5Z" fill="#c8c8c8"/></svg>
<svg style="left:44px;top:616px;" width="28" height="28" viewBox="0 0 28 28"><circle cx="13.4" cy="13.3" r="7.3" fill="none" stroke="#8a8a8a" stroke-width="3.4" stroke-dasharray="2.7 0.9"/><path d="M19.5 8.5L10.5 17.5L9.3 19.5L11.3 18.3L20.3 9.3" fill="#eee" stroke="#eee" stroke-width="1.6" stroke-linejoin="round"/><path d="M17.8 7.8L22.3 3.8A2 2 0 0 1 25.2 6.7L21.2 11.2Z" fill="#eee"/><path d="M17 7L22 12" stroke="#eee" stroke-width="1.6"/><path d="M26.5 20.5V26.5H20.5Z" fill="#c8c8c8"/></svg>
<svg style="left:72px;top:616px;" width="28" height="28" viewBox="0 0 28 28"><path d="M9.2 11.2H21L24 14.2V23.4H9.2Z" fill="#7a7a7a" stroke="#ddd" stroke-width="1.1"/><path d="M21 11.2V14.2H24" fill="#eee"/><path d="M9.5 5V7.5M4 11.5H6.5" stroke="#ccc" stroke-width="1"/><path d="M26.5 20.5V26.5H20.5Z" fill="#c8c8c8"/></svg>
<svg style="left:44px;top:648px;" width="28" height="28" viewBox="0 0 28 28"><path d="M7 10A9.3 9.3 0 1 1 12.5 22.5" fill="none" stroke="#ddd" stroke-width="1.6"/><path d="M4.5 8L9.5 7L7 13Z" fill="#ddd"/><rect x="8.2" y="10" width="10" height="8.7" fill="#7a7a7a" stroke="#ccc" stroke-width="0.8"/><path d="M6 18.5H20M8.5 8V22" stroke="#bbb" stroke-width="0.7"/><path d="M26.5 20.5V26.5H20.5Z" fill="#c8c8c8"/></svg>
<div class="a" style="left:121px;top:619px;width:32px;height:24px;border-radius:4px;background:#5c5c5c"></div>
<svg style="left:121px;top:619px;" width="32" height="24" viewBox="0 0 32 24"><path d="M8 9.3L12.5 4V7.3C19 7.3 24.5 9.5 24.3 14.5C24.1 17.5 21 19.8 16.7 20C19 18.3 19.8 16.5 19 14.8C18.2 13 15.5 12.3 12.5 12.3V14.8Z" fill="#848484"/></svg>
<div class="a" style="left:155px;top:619px;width:32px;height:24px;border-radius:4px;background:#5c5c5c"></div>
<svg style="left:155px;top:619px;" width="32" height="24" viewBox="0 0 32 24"><path d="M24 9.3L19.5 4V7.3C13 7.3 7.5 9.5 7.7 14.5C7.9 17.5 11 19.8 15.3 20C13 18.3 12.2 16.5 13 14.8C13.8 13 16.5 12.3 19.5 12.3V14.8Z" fill="#848484"/></svg>
<div class="a" style="left:189px;top:619px;width:32px;height:24px;border-radius:4px;background:#5c5c5c"></div>
<svg style="left:189px;top:619px;" width="32" height="24" viewBox="0 0 32 24"><path d="M8.8 10.5A7 7 0 0 1 21.5 8M23 14A7 7 0 0 1 10.5 16.5" fill="none" stroke="#848484" stroke-width="2.4"/><path d="M23.8 4.5V11.3H17Z M8.2 20V13.2H15Z" fill="#848484"/></svg>
<div class="a" style="left:318px;top:619px;width:32px;height:24px;border-radius:4px;background:#5c5c5c"></div>
<svg style="left:318px;top:619px;" width="32" height="24" viewBox="0 0 32 24"><path d="M7.9 18.5L13.7 5.3H14.7V18.5Z" fill="#7c7c7c"/><path d="M17.8 5.3H19.2L23.6 18.5H17.8Z" fill="#2d2d2d"/><path d="M16.2 5V19" stroke="#6a6a6a" stroke-width="0.7"/></svg>
<div class="a" style="left:352px;top:619px;width:32px;height:24px;border-radius:4px;background:#5c5c5c"></div>
<svg style="left:352px;top:619px;" width="32" height="24" viewBox="0 0 32 24"><path d="M9.4 4L22.9 8.2V12.2H9.4Z" fill="#7c7c7c"/><path d="M9.4 14H22.9V16.3L9.4 20.5Z" fill="#2d2d2d"/></svg>
<div class="a" style="left:386px;top:619px;width:32px;height:24px;border-radius:4px;background:#5c5c5c"></div>
<svg style="left:386px;top:619px;" width="32" height="24" viewBox="0 0 32 24"><rect x="11" y="12.5" width="10" height="7" rx="1" fill="none" stroke="#848484" stroke-width="0.8"/><rect x="15.5" y="6" width="6.5" height="10.5" rx="1" fill="none" stroke="#848484" stroke-width="0.8"/><path d="M13.5 6.5A4 4 0 0 0 9.5 10.5" fill="none" stroke="#848484" stroke-width="0.8"/></svg>
<div class="a" style="left:420px;top:619px;width:32px;height:24px;border-radius:4px;background:#5c5c5c"></div>
<svg style="left:420px;top:619px;" width="32" height="24" viewBox="0 0 32 24"><rect x="14" y="9" width="4.5" height="7" fill="none" stroke="#848484" stroke-width="0.8"/><path d="M11 9V6H20A2 2 0 0 1 22 8" fill="none" stroke="#848484" stroke-width="0.8" stroke-dasharray="1.5 1"/><path d="M21 16V19H12A2 2 0 0 1 10 17" fill="none" stroke="#848484" stroke-width="0.8" stroke-dasharray="1.5 1"/></svg>
<div class="a" style="left:454px;top:619px;width:32px;height:24px;border-radius:4px;background:#5c5c5c"></div>
<svg style="left:454px;top:619px;" width="32" height="24" viewBox="0 0 32 24"><rect x="8" y="6.5" width="6.5" height="10.5" rx="1" fill="none" stroke="#848484" stroke-width="0.8"/><rect x="11" y="12" width="10" height="7" rx="1" fill="none" stroke="#848484" stroke-width="0.8"/><path d="M16.5 6A5 5 0 0 1 21.5 10.5" fill="none" stroke="#848484" stroke-width="0.8"/></svg>
<div class="a" style="left:583px;top:619px;width:32px;height:24px;border-radius:4px;background:#5c5c5c"></div>
<svg style="left:583px;top:619px;" width="32" height="24" viewBox="0 0 32 24"><rect x="8" y="4" width="10.5" height="10.5" fill="none" stroke="#848484" stroke-width="0.9"/><circle cx="18" cy="14" r="5.5" fill="none" stroke="#848484" stroke-width="0.9"/></svg>
<div class="a" style="left:617px;top:619px;width:32px;height:24px;border-radius:4px;background:#5c5c5c"></div>
<svg style="left:617px;top:619px;" width="32" height="24" viewBox="0 0 32 24"><path d="M8 4H18.5V9A5.5 5.5 0 1 1 13 14.5H8Z" fill="none" stroke="#848484" stroke-width="0.9"/></svg>
<div class="a" style="left:651px;top:619px;width:32px;height:24px;border-radius:4px;background:#5c5c5c"></div>
<svg style="left:651px;top:619px;" width="32" height="24" viewBox="0 0 32 24"><rect x="8" y="4.5" width="10.5" height="10" fill="#474747"/><circle cx="18.5" cy="14" r="5.5" fill="#474747"/><path d="M12.5 14.5A5.5 5.5 0 0 1 18.5 8.5V14.5Z" fill="none" stroke="#848484" stroke-width="0.9"/></svg>
<div class="a" style="left:685px;top:619px;width:32px;height:24px;border-radius:4px;background:#5c5c5c"></div>
<svg style="left:685px;top:619px;" width="32" height="24" viewBox="0 0 32 24"><path d="M8 4H13.5L9 11V14H8Z" fill="none" stroke="#848484" stroke-width="0.9"/><circle cx="17.5" cy="10" r="5.2" fill="#474747"/><circle cx="16" cy="15.5" r="5" fill="#474747"/></svg>
<div class="a" style="left:719px;top:619px;width:32px;height:24px;border-radius:4px;background:#5c5c5c"></div>
<svg style="left:719px;top:619px;" width="32" height="24" viewBox="0 0 32 24"><path d="M8 4H17A6 6 0 0 1 21.5 12L18 14.5" fill="none" stroke="#848484" stroke-width="0.9"/><path d="M8 4V14.5" stroke="#848484" stroke-width="0.9"/><circle cx="15" cy="15" r="5.5" fill="#474747"/><path d="M11 11A5 5 0 0 1 21 12" fill="none" stroke="#848484" stroke-width="0.9"/></svg>
<div class="a" style="left:753px;top:619px;width:32px;height:24px;border-radius:4px;background:#5c5c5c"></div>
<svg style="left:753px;top:619px;" width="32" height="24" viewBox="0 0 32 24"><rect x="8" y="4" width="7" height="8.5" fill="none" stroke="#848484" stroke-width="0.9"/><circle cx="15" cy="12.5" r="4" fill="none" stroke="#848484" stroke-width="0.9"/><circle cx="19" cy="15.5" r="4.5" fill="none" stroke="#848484" stroke-width="0.9"/></svg>
<div class="a" style="left:787px;top:619px;width:32px;height:24px;border-radius:4px;background:#5c5c5c"></div>
<svg style="left:787px;top:619px;" width="32" height="24" viewBox="0 0 32 24"><rect x="8" y="4" width="9.5" height="9" fill="none" stroke="#848484" stroke-width="0.9"/><circle cx="17.5" cy="14.5" r="5.3" fill="#5c5c5c" stroke="#848484" stroke-width="0.9"/></svg>
<div class="a" style="left:821px;top:619px;width:32px;height:24px;border-radius:4px;background:#5c5c5c"></div>
<svg style="left:821px;top:619px;" width="32" height="24" viewBox="0 0 32 24"><rect x="8" y="4" width="10" height="9.5" fill="none" stroke="#848484" stroke-width="0.9"/><circle cx="18" cy="15" r="5.8" fill="#5c5c5c" stroke="#848484" stroke-width="0.9"/></svg>
<div class="a" style="left:855px;top:619px;width:32px;height:24px;border-radius:4px;background:#5c5c5c"></div>
<svg style="left:855px;top:619px;" width="32" height="24" viewBox="0 0 32 24"><rect x="8" y="4" width="10" height="9.5" fill="#474747" stroke="#848484" stroke-width="0.9"/><circle cx="18" cy="15" r="5.8" fill="#474747" stroke="#848484" stroke-width="0.9"/></svg>
<div class="a" style="left:898px;top:619px;width:32px;height:24px;border-radius:4px;background:#5c5c5c"></div>
<svg style="left:898px;top:619px;" width="32" height="24" viewBox="0 0 32 24"><rect x="8" y="4" width="10" height="9.5" fill="none" stroke="#848484" stroke-width="0.9"/><circle cx="18" cy="15" r="5.5" fill="none" stroke="#848484" stroke-width="0.9"/></svg>
<div class="a" style="left:932px;top:619px;width:32px;height:24px;border-radius:4px;background:#5c5c5c"></div>
<svg style="left:932px;top:619px;" width="32" height="24" viewBox="0 0 32 24"><rect x="8" y="4" width="10" height="9.5" fill="#505050"/><circle cx="18" cy="15" r="5.5" fill="none" stroke="#848484" stroke-width="0.9"/><path d="M18 9.5V15H12.5" fill="none" stroke="#848484" stroke-width="0.9"/></svg>
<div class="a" style="left:966px;top:619px;width:32px;height:24px;border-radius:4px;background:#5c5c5c"></div>
<svg style="left:966px;top:619px;" width="32" height="24" viewBox="0 0 32 24"><path d="M8 4H18V9.5L12.5 13.5H8Z" fill="none" stroke="#848484" stroke-width="0.9"/><path d="M12.5 13.5L18 9.5A5.5 5.5 0 1 1 12.5 15Z" fill="#474747"/></svg>
<div class="a" style="left:1000px;top:619px;width:32px;height:24px;border-radius:4px;background:#5c5c5c"></div>
<svg style="left:1000px;top:619px;" width="32" height="24" viewBox="0 0 32 24"><rect x="8" y="4" width="10" height="9.5" fill="none" stroke="#848484" stroke-width="0.9"/><circle cx="18" cy="15" r="5.5" fill="none" stroke="#848484" stroke-width="0.9"/><path d="M13 11A5 5 0 0 1 18 10" fill="none" stroke="#848484" stroke-width="0.9"/></svg>
<div class="a" style="left:1034px;top:619px;width:32px;height:24px;border-radius:4px;background:#5c5c5c"></div>
<svg style="left:1034px;top:619px;" width="32" height="24" viewBox="0 0 32 24"><rect x="8" y="4" width="10" height="9.5" fill="#262626" stroke="#848484" stroke-width="0.9"/><circle cx="18" cy="15" r="5.5" fill="none" stroke="#848484" stroke-width="0.9"/></svg>
<div class="a" style="left:1162px;top:619px;width:32px;height:24px;border-radius:4px;background:#5c5c5c"></div>
<svg style="left:1162px;top:619px;" width="32" height="24" viewBox="0 0 32 24"><path d="M15 7.5H10.8Q9.3 7.5 9.3 9V17Q9.3 18.6 10.8 18.6H19.8Q21.4 18.6 21.4 17V13" fill="none" stroke="#848484" stroke-width="1.2"/><path d="M22.3 5.5L14.3 13.3M14.3 9.2V13.3H18.4" stroke="#848484" stroke-width="1.3" fill="none"/></svg>
<div class="a" style="left:1196px;top:619px;width:32px;height:24px;border-radius:4px;background:#5c5c5c"></div>
<svg style="left:1196px;top:619px;" width="32" height="24" viewBox="0 0 32 24"><path d="M15 7.5H10.8Q9.3 7.5 9.3 9V17Q9.3 18.6 10.8 18.6H19.8Q21.4 18.6 21.4 17V13" fill="none" stroke="#848484" stroke-width="1.2"/><path d="M14.3 13.3L22.3 5.5M18.2 5.5H22.3V9.6" stroke="#848484" stroke-width="1.3" fill="none"/></svg>
<div class="a" style="left:1230px;top:619px;width:32px;height:24px;border-radius:4px;background:#5c5c5c"></div>
<svg style="left:1230px;top:619px;" width="32" height="24" viewBox="0 0 32 24"><circle cx="16" cy="12" r="7.5" fill="none" stroke="#848484" stroke-width="0.9"/><rect x="12" y="9" width="7" height="7" fill="none" stroke="#848484" stroke-width="0.8"/><path d="M11 12H20M15.5 7.5V17" stroke="#848484" stroke-width="0.8"/></svg>
<div class="a" style="left:1264px;top:619px;width:32px;height:24px;border-radius:4px;background:#5c5c5c"></div>
<svg style="left:1264px;top:619px;" width="32" height="24" viewBox="0 0 32 24"><rect x="8.5" y="11.5" width="7" height="7" fill="#848484"/><path d="M14 7.5H22V15H18.5" fill="none" stroke="#848484" stroke-width="1.5"/></svg>
<div class="a" style="left:1298px;top:619px;width:32px;height:24px;border-radius:4px;background:#5c5c5c"></div>
<svg style="left:1298px;top:619px;" width="32" height="24" viewBox="0 0 32 24"><rect x="9" y="12" width="6.5" height="6.5" fill="none" stroke="#848484" stroke-width="1.5"/><rect x="15" y="6" width="8" height="8" fill="#848484"/></svg>
<div class="a" style="left:1332px;top:619px;width:32px;height:24px;border-radius:4px;background:#5c5c5c"></div>
<svg style="left:1332px;top:619px;" width="32" height="24" viewBox="0 0 32 24"><rect x="9" y="5" width="14" height="14" rx="1.5" fill="none" stroke="#848484" stroke-width="1"/><path d="M16 16V8.5M12.8 11.5L16 8.3L19.2 11.5" fill="none" stroke="#848484" stroke-width="1.1"/></svg>
<div class="a" style="left:1366px;top:619px;width:32px;height:24px;border-radius:4px;background:#5c5c5c"></div>
<svg style="left:1366px;top:619px;" width="32" height="24" viewBox="0 0 32 24"><rect x="9" y="5" width="14" height="14" rx="1.5" fill="none" stroke="#848484" stroke-width="1"/><path d="M16 8V15.5M12.8 12.5L16 15.7L19.2 12.5" fill="none" stroke="#848484" stroke-width="1.1"/></svg>
<div class="a" style="left:1400px;top:619px;width:32px;height:24px;border-radius:4px;background:#5c5c5c"></div>
<svg style="left:1400px;top:619px;" width="32" height="24" viewBox="0 0 32 24"><path d="M11.5 10A6.3 6.3 0 1 0 20.5 10" fill="none" stroke="#848484" stroke-width="1.3"/><path d="M16 5V15M12.8 12L16 15.2L19.2 12" fill="none" stroke="#848484" stroke-width="1.3"/></svg>
<div class="a" style="left:1434px;top:619px;width:32px;height:24px;border-radius:4px;background:#5c5c5c"></div>
<svg style="left:1434px;top:619px;" width="32" height="24" viewBox="0 0 32 24"><path d="M11.5 6V13L14 16V18M20.5 19V11L18 8V6" fill="none" stroke="#848484" stroke-width="1.2"/><circle cx="11.5" cy="5.5" r="1.5" fill="none" stroke="#848484"/><circle cx="20.5" cy="19" r="1.5" fill="none" stroke="#848484"/><path d="M12 16L14 18L16 16M16 8L18 6L20 8" fill="#848484" stroke="#848484"/></svg>
<div class="a" style="left:1563px;top:619px;width:32px;height:24px;border-radius:4px;background:#5c5c5c"></div>
<svg style="left:1563px;top:619px;" width="32" height="24" viewBox="0 0 32 24"><rect x="7.5" y="3.5" width="17" height="17.5" fill="none" stroke="#eeeeee" stroke-width="1.1"/><path d="M9 7H22.8V8.5H9Z" fill="#eeeeee"/><rect x="12.5" y="7.5" width="3.7" height="8.8" fill="#eeeeee"/><rect x="17.5" y="7.5" width="3.4" height="5" fill="#eeeeee"/><rect x="18.8" y="15.3" width="3.6" height="3.6" fill="#eeeeee"/><path d="M9.3 8L11.2 8L10.4 12.5Z" fill="#eeeeee"/></svg>
<div class="a" style="left:1597px;top:619px;width:32px;height:24px;border-radius:4px;background:#5c5c5c"></div>
<svg style="left:1597px;top:619px;" width="32" height="24" viewBox="0 0 32 24"><rect x="7.5" y="3.5" width="17" height="17.5" fill="none" stroke="#eeeeee" stroke-width="1.1"/><rect x="10" y="7" width="11.3" height="11" rx="2.5" fill="#eeeeee"/><path d="M13.5 15.5L15 12.5H18L16.5 15.5Z" fill="#333"/><path d="M14.5 10.5H18.5" stroke="#666" stroke-width="0.7"/></svg>
<div class="a" style="left:1632px;top:619px;width:32px;height:24px;border-radius:4px;background:#5c5c5c"></div>
<svg style="left:1632px;top:619px;" width="32" height="24" viewBox="0 0 32 24"><rect x="7.5" y="3.5" width="17" height="17.5" fill="none" stroke="#eeeeee" stroke-width="1.1"/><path d="M12.5 6.5H18.5Q19.5 6.5 19.5 7.5V9M16 18.8H11Q10.3 18.8 10.3 18V9L12.5 6.5" fill="none" stroke="#eeeeee" stroke-width="0.8"/><path d="M12 11H13.5M12 13.5H13.5M12 16H15" stroke="#eeeeee" stroke-width="0.8"/><circle cx="17.3" cy="12.2" r="3.3" fill="none" stroke="#eeeeee" stroke-width="0.9"/><path d="M19.6 14.6L22 17.2" stroke="#eeeeee" stroke-width="1.5"/></svg>
<div class="a" style="left:1761px;top:619px;width:32px;height:24px;border-radius:4px;background:#5c5c5c"></div>
<svg style="left:1761px;top:619px;" width="32" height="24" viewBox="0 0 32 24"><rect x="8.3" y="4.5" width="15.4" height="10.5" rx="1.5" fill="none" stroke="#eeeeee" stroke-width="1"/><path d="M9 5L23 14.5M23 5L9 14.5" stroke="#eeeeee" stroke-width="0.9"/><path d="M10.5 17.5H21.5M10.5 19.7H21.5" stroke="#eeeeee" stroke-width="0.8"/></svg>
<div class="a" style="left:1795px;top:619px;width:32px;height:24px;border-radius:4px;background:#5c5c5c"></div>
<svg style="left:1795px;top:619px;" width="32" height="24" viewBox="0 0 32 24"><defs><pattern id="dots7" width="2" height="2" patternUnits="userSpaceOnUse"><rect width="2" height="2" fill="#6e6e6e"/><rect width="1" height="1" fill="#3a3a3a"/></pattern></defs><rect x="8.5" y="4.5" width="15" height="15" fill="#2e2e2e"/><path d="M8.5 7.5H23.5M8.5 10.5H23.5M8.5 13.5H23.5M8.5 16.5H23.5M11.5 4.5V19.5M14.5 4.5V19.5M17.5 4.5V19.5M20.5 4.5V19.5" stroke="#f0f0f0" stroke-width="1"/><path d="M23.5 5V19.5H9V16.5H12V13.5H15V10.5H18V7.5H21V5Z" fill="url(#dots7)"/><rect x="8.5" y="4.5" width="15" height="15" fill="none" stroke="#f4f4f4" stroke-width="1.2"/></svg>
<div class="a" style="left:1829px;top:619px;width:32px;height:24px;border-radius:4px;background:radial-gradient(ellipse at 50% 50%,#3a90c2,#2c729f)"></div>
<svg style="left:1829px;top:619px;" width="32" height="24" viewBox="0 0 32 24"><path d="M17.5 5.7A6.3 6.3 0 0 1 17.5 18.3" fill="none" stroke="#eeeeee" stroke-width="1" stroke-dasharray="2 1.4"/><circle cx="13.8" cy="11.9" r="5.9" fill="#eeeeee"/></svg>
<div class="a" style="left:1863px;top:619px;width:32px;height:24px;border-radius:4px;background:radial-gradient(ellipse at 50% 50%,#3a90c2,#2c729f)"></div>
<svg style="left:1863px;top:619px;" width="32" height="24" viewBox="0 0 32 24"><circle cx="16" cy="11.9" r="7.8" fill="none" stroke="#eeeeee" stroke-width="0.9"/><circle cx="14.3" cy="10.2" r="1.5" fill="#eeeeee"/><path d="M12 15.4H19.4V7" fill="none" stroke="#eeeeee" stroke-width="0.8"/></svg>
<div class="a" style="left:1897px;top:619px;width:32px;height:24px;border-radius:4px;background:#5c5c5c"></div>
<svg style="left:1897px;top:619px;" width="32" height="24" viewBox="0 0 32 24"><rect x="7.5" y="3.5" width="18" height="17.5" fill="none" stroke="#eeeeee" stroke-width="1.1"/><circle cx="14.2" cy="10.9" r="2.1" fill="#eeeeee"/><path d="M12 18H21.3V10.5" fill="none" stroke="#eeeeee" stroke-width="0.9"/></svg>
<div class="a" style="left:299px;top:651px;width:23px;height:24px;border-radius:4px;background:radial-gradient(ellipse at 50% 50%,#3a90c2,#2c729f)"></div>
<svg style="left:299px;top:651px;" width="23" height="24" viewBox="0 0 23 24"><path d="M7.5 4.5L17.3 13.5L13 14L15.8 19.5L13.8 20.6L11.1 15L7.8 18.2Z" fill="#eee"/></svg>
<svg style="left:332px;top:651px;" width="24" height="24" viewBox="0 0 24 24"><rect x="5" y="4" width="13" height="12" rx="2" fill="none" stroke="#ddd" stroke-width="1.1"/><path d="M12 10.5L20.5 17.5L17 18L19 22L17.5 22.8L15.5 18.8L13 20.8Z" fill="#eee"/></svg>
<svg style="left:365px;top:651px;" width="24" height="24" viewBox="0 0 24 24"><ellipse cx="12.5" cy="9" rx="7.5" ry="5.5" fill="#2e2e2e" stroke="#ccc" stroke-width="0.9"/><ellipse cx="9" cy="15" rx="4" ry="5.5" fill="#2e2e2e" stroke="#ccc" stroke-width="0.9"/><path d="M13 10.5L20 16.5L17.3 17L18.8 20L17.5 20.6L16 17.7L14 19.5Z" fill="#eee"/></svg>
<svg style="left:398px;top:651px;" width="26" height="24" viewBox="0 0 26 24"><rect x="5.5" y="4" width="13.5" height="13.5" fill="none" stroke="#9a9a9a" stroke-width="0.9"/><rect x="8.6" y="7" width="7.4" height="7.5" fill="none" stroke="#e0e0e0" stroke-width="2"/><rect x="4.5" y="3" width="2" height="2" fill="#aaa"/><rect x="18" y="3" width="2" height="2" fill="#aaa"/><rect x="4.5" y="16.5" width="2" height="2" fill="#aaa"/><path d="M19.5 17.5L23.5 20.5L20.5 21Z" fill="#aaa"/></svg>
<div class="a" style="left:434px;top:655px;width:1px;height:16px;background:#1a1a1a"></div>
<div class="a" style="left:275px;top:657px;width:1px;height:13px;background:#1a1a1a"></div>
<svg style="left:446px;top:653px;" width="22" height="22" viewBox="0 0 22 22"><rect x="8.4" y="8.3" width="5.4" height="5.4" fill="none" stroke="#ddd" stroke-width="1.4"/><path d="M11.1 4.4L8.6 7H13.6Z M11.1 17.4L8.6 14.8H13.6Z M4.5 11L7.2 8.5V13.5Z M17.6 11L14.9 8.5V13.5Z" fill="#e4e4e4"/></svg>
<div class="t" style="left:197px;top:659px;font-size:11.5px;color:#f4f4f4;letter-spacing:-0.15px">No Selection</div>
<div class="a" style="left:472px;top:653px;width:51px;height:20px;background:#2c2c2c"></div>
<div class="t" style="left:476px;top:658px;font-size:11.5px;color:#f4f4f4;letter-spacing:-0.3px">1.0 pt</div>
<div class="a" style="left:522px;top:653px;width:15px;height:19px;background:#555;border-radius:3px"></div>
<svg style="left:522px;top:653px;" width="15" height="19" viewBox="0 0 15 19"><path d="M3.8 6.8L6.9 1.6L10 6.8Z M3.8 12L6.9 17.4L10 12Z" fill="#e8e8e8"/></svg>
<div class="pb" style="left:551px;top:653px;width:80px">Document</div>
<div class="pb" style="left:641px;top:653px;width:80px">Styles</div>
<div class="pb" style="left:731px;top:653px;width:100px">Create Layer</div>
<div class="pb" style="left:841px;top:653px;width:100px">Layer Options</div>
<div class="a" style="left:952px;top:656px;width:1px;height:14px;background:#1a1a1a"></div>
</body></html>
